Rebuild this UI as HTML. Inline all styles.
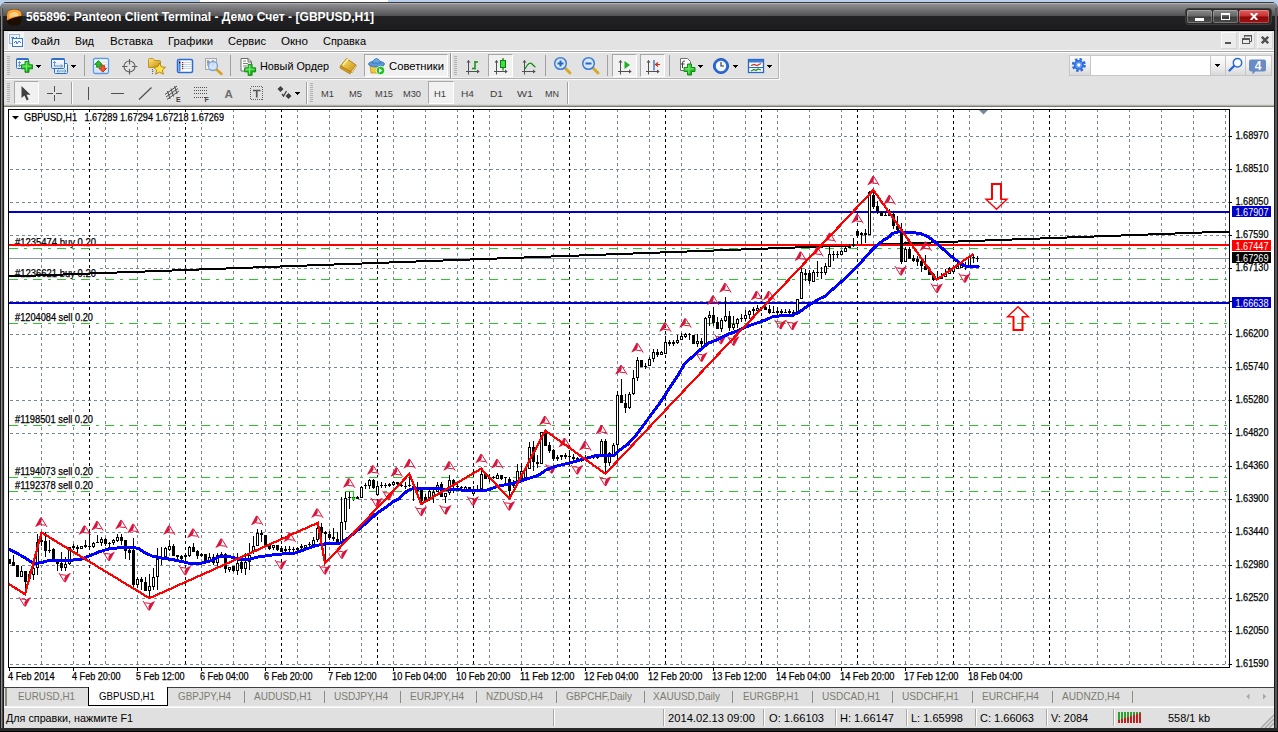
<!DOCTYPE html>
<html><head><meta charset="utf-8"><title>Terminal</title><style>
html,body{margin:0;padding:0;}
body{width:1278px;height:732px;overflow:hidden;position:relative;background:#b9d1ea;font-family:"Liberation Sans",sans-serif;font-size:11px;color:#000;}
.abs{position:absolute;}
#win{position:absolute;left:0;top:2px;width:1278px;height:730px;background:#1b1b1b;border-radius:7px 7px 0 0;overflow:hidden;}
#tb-top{position:absolute;left:0;top:0;width:1278px;height:14px;background:linear-gradient(#3c3c3c 0,#3c3c3c 1px,#b0b0b2 1px,#b0b0b2 2px,#909094 2px,#525254 14px);}
#tb-bot{position:absolute;left:0;top:14px;width:1278px;height:14px;background:linear-gradient(#232325,#1c1c1e);border-bottom:1px solid #000;}
#title{position:absolute;left:26px;top:8px;color:#fff;font-weight:bold;font-size:13px;line-height:16px;white-space:nowrap;letter-spacing:0px;}
#client{position:absolute;left:4px;top:31px;width:1270px;height:697px;background:#e2e2e2;}
.menu{position:absolute;top:34px;font-size:11px;line-height:14px;white-space:nowrap;}
.t{position:absolute;white-space:nowrap;line-height:14px;}
.sep{position:absolute;width:1px;background:#a0a0a0;}
.sepw{position:absolute;width:1px;background:#fff;}
.pressed{position:absolute;background:#f1f1f1;border:1px solid #a8a8a8;border-right-color:#fff;border-bottom-color:#fff;box-sizing:border-box;}
.grip{position:absolute;width:3px;background:repeating-linear-gradient(#b0b0b0 0 1px,transparent 1px 2px);}
.tab{position:absolute;top:691px;color:#7c7c72;font-size:11px;line-height:14px;white-space:nowrap;}
.tsep{position:absolute;top:691px;width:1px;height:12px;background:#8c8c84;}
.st{position:absolute;top:712px;font-size:11px;line-height:14px;white-space:nowrap;}
.ssep{position:absolute;top:709px;width:1px;height:17px;background:#a8a8a8;box-shadow:1px 0 0 #fff;}
</style></head><body>
<div id="win"><div id="tb-top"></div><div id="tb-bot"></div></div>
<div class="abs" style="left:1px;top:8px;width:1px;height:720px;background:#8a8a8a"></div><div class="abs" style="left:2px;top:8px;width:1px;height:720px;background:#4c4c4c"></div>
<div class="abs" style="left:200px;top:0;width:188px;height:2px;background:#fff"></div>
<div class="abs" style="left:1275px;top:8px;width:2px;height:720px;background:#58585a"></div>
<div id="client"></div>
<svg class="abs" style="left:6px;top:9px" width="16" height="17" viewBox="0 0 16 17"><defs><linearGradient id="og" x1="0" y1="0" x2="0" y2="1"><stop offset="0" stop-color="#ffa830"/><stop offset="1" stop-color="#ff9018"/></linearGradient></defs><rect x="1" y="0.5" width="14.500" height="16" rx="5" fill="#1c0e00"/><path d="M1 11.500 V5.500 Q1 0.500 8.200 0.500 Q15.500 0.500 15.500 5.500 V7 Q8 7.500 1 11.500 Z" fill="url(#og)"/><path d="M3.500 9 V5 Q8 1.500 12.500 4.500 V7 Q8 7 3.500 9 Z" fill="#ffe0b0" opacity="0.75"/></svg>
<svg class="abs" style="left:26px;top:8px;overflow:visible" width="350" height="18"><text x="0" y="13" font-size="13px" font-weight="bold" fill="#fff" font-family="Liberation Sans, sans-serif" textLength="348" lengthAdjust="spacingAndGlyphs">565896: Panteon Client Terminal - Демо Счет - [GBPUSD,H1]</text></svg>
<div class="abs" style="left:1186px;top:9px;width:85px;height:15px;border-radius:3px;background:#2a2a2a;box-shadow:0 0 0 1px #3d3d3d"></div>
<div class="abs" style="left:1187px;top:10px;width:25px;height:13px;border-radius:2px;background:linear-gradient(#8a8a8a,#666 48%,#3c3c3c 52%,#4a4a4a);box-shadow:inset 0 0 0 1px rgba(255,255,255,.25)"></div>
<div class="abs" style="left:1213px;top:10px;width:25px;height:13px;border-radius:2px;background:linear-gradient(#8a8a8a,#666 48%,#3c3c3c 52%,#4a4a4a);box-shadow:inset 0 0 0 1px rgba(255,255,255,.25)"></div>
<div class="abs" style="left:1239px;top:10px;width:30px;height:13px;border-radius:2px;background:linear-gradient(#e06060,#c83030 48%,#8c0808 52%,#a01010);box-shadow:inset 0 0 0 1px rgba(255,255,255,.25)"></div>
<div class="abs" style="left:1195px;top:18px;width:9px;height:3px;background:#fff"></div>
<div class="abs" style="left:1221px;top:13px;width:9px;height:7px;border:1px solid #fff;border-top-width:2px;box-sizing:border-box"></div>
<svg class="abs" style="left:1250px;top:13px" width="8" height="7" viewBox="0 0 8 7"><path d="M0.7 0 L7.3 7 M7.3 0 L0.7 7" stroke="#fff" stroke-width="2"/></svg>
<div class="abs" style="left:4px;top:31px;width:1270px;height:19px;background:#e3e3e3"></div>
<div class="abs" style="left:4px;top:50px;width:1270px;height:1px;background:#fff"></div>
<div class="abs" style="left:4px;top:51px;width:1270px;height:1px;background:#a4a4a4"></div>
<div class="abs" style="left:4px;top:52px;width:1270px;height:1px;background:#fff"></div>
<div class="abs" style="left:8px;top:32px;width:16px;height:18px;background:#f4f4f4"></div>
<svg class="abs" style="left:8px;top:33px" width="16" height="16" viewBox="0 0 16 16"><rect x="1.5" y="1.5" width="10" height="9" fill="#eef4ff" stroke="#3a78d8" stroke-dasharray="1 1"/><rect x="4.5" y="5.5" width="10" height="8" fill="#fff" stroke="#3a78d8"/><path d="M3 5 l2 -1 l2 2 l2 -2 M6 10 l2 -2 l1 3 l2 -3 l2 2" stroke="#3a78d8" fill="none" stroke-width="1"/></svg>
<div class="menu" style="left:31px;width:29px"><svg width="29" height="14" style="display:block;overflow:visible"><text x="0" y="11" font-size="11px" font-family="Liberation Sans, sans-serif" textLength="29" lengthAdjust="spacingAndGlyphs">Файл</text></svg></div>
<div class="menu" style="left:75px;width:19px"><svg width="19" height="14" style="display:block;overflow:visible"><text x="0" y="11" font-size="11px" font-family="Liberation Sans, sans-serif" textLength="19" lengthAdjust="spacingAndGlyphs">Вид</text></svg></div>
<div class="menu" style="left:110px;width:43px"><svg width="43" height="14" style="display:block;overflow:visible"><text x="0" y="11" font-size="11px" font-family="Liberation Sans, sans-serif" textLength="43" lengthAdjust="spacingAndGlyphs">Вставка</text></svg></div>
<div class="menu" style="left:168px;width:45px"><svg width="45" height="14" style="display:block;overflow:visible"><text x="0" y="11" font-size="11px" font-family="Liberation Sans, sans-serif" textLength="45" lengthAdjust="spacingAndGlyphs">Графики</text></svg></div>
<div class="menu" style="left:228px;width:38px"><svg width="38" height="14" style="display:block;overflow:visible"><text x="0" y="11" font-size="11px" font-family="Liberation Sans, sans-serif" textLength="38" lengthAdjust="spacingAndGlyphs">Сервис</text></svg></div>
<div class="menu" style="left:281px;width:27px"><svg width="27" height="14" style="display:block;overflow:visible"><text x="0" y="11" font-size="11px" font-family="Liberation Sans, sans-serif" textLength="27" lengthAdjust="spacingAndGlyphs">Окно</text></svg></div>
<div class="menu" style="left:323px;width:43px"><svg width="43" height="14" style="display:block;overflow:visible"><text x="0" y="11" font-size="11px" font-family="Liberation Sans, sans-serif" textLength="43" lengthAdjust="spacingAndGlyphs">Справка</text></svg></div>
<div class="abs" style="left:1221px;top:32px;width:16px;height:17px;background:#ececec;border:1px solid #f8f8f8;border-right-color:#d4d4d4;border-bottom-color:#d4d4d4;box-sizing:border-box"></div>
<div class="abs" style="left:1239px;top:32px;width:16px;height:17px;background:#ececec;border:1px solid #f8f8f8;border-right-color:#d4d4d4;border-bottom-color:#d4d4d4;box-sizing:border-box"></div>
<div class="abs" style="left:1257px;top:32px;width:16px;height:17px;background:#ececec;border:1px solid #f8f8f8;border-right-color:#d4d4d4;border-bottom-color:#d4d4d4;box-sizing:border-box"></div>
<div class="abs" style="left:1225px;top:42px;width:6px;height:2px;background:#555"></div>
<svg class="abs" style="left:1241px;top:34px" width="12" height="12" viewBox="0 0 12 12"><path d="M3.5 3.5 V1.5 H10.5 V7.5 H8.5" stroke="#555" fill="none"/><rect x="1.5" y="4.5" width="7" height="5" stroke="#555" fill="none"/><rect x="1" y="4" width="8" height="2" fill="#555"/><rect x="3" y="1" width="8" height="1.5" fill="#555"/></svg>
<svg class="abs" style="left:1261px;top:36px" width="8" height="8" viewBox="0 0 8 8"><path d="M0.8 0.8 L7.2 7.2 M7.2 0.8 L0.8 7.2" stroke="#505050" stroke-width="2.4"/></svg>
<svg width="0" height="0" style="position:absolute"><defs><linearGradient id="pg" x1="0" y1="0" x2="1" y2="1"><stop offset="0" stop-color="#50e850"/><stop offset="1" stop-color="#08a808"/></linearGradient><linearGradient id="wg" x1="0" y1="0" x2="0" y2="1"><stop offset="0" stop-color="#ffffff"/><stop offset="1" stop-color="#d4e6fa"/></linearGradient><linearGradient id="gold" x1="0" y1="0" x2="1" y2="1"><stop offset="0" stop-color="#ffe878"/><stop offset="1" stop-color="#c88c10"/></linearGradient></defs></svg>
<div class="abs" style="left:4px;top:53px;width:1270px;height:53px;background:#e2e2e2"></div>
<div class="abs" style="left:5px;top:79px;width:775px;height:1px;background:#fafafa"></div>
<div class="abs" style="left:5px;top:77px;width:774px;height:1px;background:#eeeeee"></div>
<div class="abs" style="left:5px;top:78px;width:774px;height:1px;background:#b0b0b0"></div>
<div class="abs" style="left:778px;top:53px;width:1px;height:26px;background:#b8b8b8"></div>
<div class="abs" style="left:779px;top:53px;width:1px;height:27px;background:#fafafa"></div>
<div class="abs" style="left:4px;top:104px;width:1270px;height:1px;background:#d8d8d8"></div>
<div class="abs" style="left:4px;top:105px;width:1270px;height:1px;background:#b4b4ac"></div>
<div class="abs" style="left:4px;top:106px;width:1270px;height:1px;background:#7a786c"></div>
<div class="grip" style="left:7px;top:56px;height:20px"></div>
<div class="grip" style="left:454px;top:56px;height:20px"></div>
<div class="grip" style="left:7px;top:83px;height:20px"></div>
<div class="grip" style="left:310px;top:83px;height:20px"></div>
<div class="sep" style="left:84px;top:55px;height:21px"></div>
<div class="sep" style="left:230px;top:55px;height:21px"></div>
<div class="sep" style="left:545px;top:55px;height:21px"></div>
<div class="sep" style="left:607px;top:55px;height:21px"></div>
<div class="sep" style="left:669px;top:55px;height:21px"></div>
<div class="sep" style="left:450px;top:53px;height:25px;background:#909090"></div><div class="sepw" style="left:451px;top:53px;height:25px"></div>
<div class="sep" style="left:71px;top:82px;height:22px"></div><div class="sepw" style="left:72px;top:82px;height:22px"></div>
<div class="sep" style="left:306px;top:82px;height:22px"></div><div class="sepw" style="left:307px;top:82px;height:22px"></div>
<div class="sep" style="left:567px;top:82px;height:22px"></div><div class="sepw" style="left:568px;top:82px;height:22px"></div>
<div class="pressed" style="left:364px;top:54px;width:84px;height:23px"></div>
<div class="pressed" style="left:488px;top:54px;width:25px;height:23px"></div>
<div class="pressed" style="left:612px;top:54px;width:25px;height:23px"></div>
<div class="pressed" style="left:640px;top:54px;width:25px;height:23px"></div>
<div class="pressed" style="left:14px;top:81px;width:25px;height:23px"></div>
<div class="pressed" style="left:428px;top:81px;width:26px;height:23px"></div>
<svg class="abs" style="left:260px;top:59px;overflow:visible" width="69" height="14"><text x="0" y="11" font-size="11px" font-family="Liberation Sans, sans-serif" fill="#000" textLength="69" lengthAdjust="spacingAndGlyphs">Новый Ордер</text></svg>
<svg class="abs" style="left:389px;top:59px;overflow:visible" width="55" height="14"><text x="0" y="11" font-size="11px" font-family="Liberation Sans, sans-serif" fill="#000" textLength="55" lengthAdjust="spacingAndGlyphs">Советники</text></svg>
<svg class="abs" style="left:321px;top:86px;overflow:visible" width="13" height="14"><text x="0" y="11" font-size="9.6px" font-family="Liberation Sans, sans-serif" fill="#404040" textLength="13" lengthAdjust="spacingAndGlyphs">M1</text></svg>
<svg class="abs" style="left:349px;top:86px;overflow:visible" width="13" height="14"><text x="0" y="11" font-size="9.6px" font-family="Liberation Sans, sans-serif" fill="#404040" textLength="13" lengthAdjust="spacingAndGlyphs">M5</text></svg>
<svg class="abs" style="left:375px;top:86px;overflow:visible" width="18" height="14"><text x="0" y="11" font-size="9.6px" font-family="Liberation Sans, sans-serif" fill="#404040" textLength="18" lengthAdjust="spacingAndGlyphs">M15</text></svg>
<svg class="abs" style="left:403px;top:86px;overflow:visible" width="18" height="14"><text x="0" y="11" font-size="9.6px" font-family="Liberation Sans, sans-serif" fill="#404040" textLength="18" lengthAdjust="spacingAndGlyphs">M30</text></svg>
<svg class="abs" style="left:434px;top:86px;overflow:visible" width="12" height="14"><text x="0" y="11" font-size="9.6px" font-family="Liberation Sans, sans-serif" fill="#404040" textLength="12" lengthAdjust="spacingAndGlyphs">H1</text></svg>
<svg class="abs" style="left:461px;top:86px;overflow:visible" width="13" height="14"><text x="0" y="11" font-size="9.6px" font-family="Liberation Sans, sans-serif" fill="#404040" textLength="13" lengthAdjust="spacingAndGlyphs">H4</text></svg>
<svg class="abs" style="left:490px;top:86px;overflow:visible" width="13" height="14"><text x="0" y="11" font-size="9.6px" font-family="Liberation Sans, sans-serif" fill="#404040" textLength="13" lengthAdjust="spacingAndGlyphs">D1</text></svg>
<svg class="abs" style="left:517px;top:86px;overflow:visible" width="16" height="14"><text x="0" y="11" font-size="9.6px" font-family="Liberation Sans, sans-serif" fill="#404040" textLength="16" lengthAdjust="spacingAndGlyphs">W1</text></svg>
<svg class="abs" style="left:545px;top:86px;overflow:visible" width="14" height="14"><text x="0" y="11" font-size="9.6px" font-family="Liberation Sans, sans-serif" fill="#404040" textLength="14" lengthAdjust="spacingAndGlyphs">MN</text></svg>
<svg class="abs" style="left:15px;top:57px" width="20" height="18" viewBox="0 0 20 18"><rect x="1.5" y="1.5" width="12" height="10" rx="1" fill="url(#wg)" stroke="#2e6fc8"/><rect x="1.5" y="1.5" width="12" height="1.5" fill="#2e6fc8"/><path d="M4.5 4.5 v5 M3 6 l1.5 -1.5 l1.5 1.5 M3 8 l1.5 1.5 l1.5 -1.5" stroke="#6088b8" fill="none" stroke-width="0.9"/><path d="M10 4.300000000000001 h4 v3.5 h3.5 v4 h-3.5 v3.5 h-4 v-3.5 h-3.5 v-4 h3.5 z" fill="url(#pg)" stroke="#0c800c" stroke-width="0.9" stroke-linejoin="round"/><path d="M11.4 5.6000000000000005 v8.4 M7.8 9.200000000000001 h8.4" stroke="#8cf48c" stroke-width="1" opacity="0.8"/></svg>
<svg class="abs" style="left:36px;top:65px" width="5" height="3"><path d="M0 0 H5 L2.5 3 Z" fill="#000" shape-rendering="crispEdges"/></svg>
<svg class="abs" style="left:50px;top:57px" width="20" height="18" viewBox="0 0 20 18"><rect x="4.5" y="6.5" width="13" height="10" rx="1" fill="url(#wg)" stroke="#2e6fc8"/><path d="M7 14 h9 M8.5 12.5 l-1.5 1.5 l1.5 1.5 M14.5 12.5 l1.5 1.5 l-1.5 1.5" stroke="#6088b8" fill="none" stroke-width="0.9"/><rect x="1.5" y="1.5" width="13" height="10" rx="1" fill="url(#wg)" stroke="#2e6fc8"/><rect x="1.500" y="1.500" width="13" height="1.500" fill="#2e6fc8"/><path d="M4.500 4.500 v5 M3 6 l1.500 -1.500 l1.500 1.500 M4.500 9 h8 M11 7.500 l1.500 1.500 l-1.500 1.500" stroke="#6088b8" fill="none" stroke-width="0.9"/></svg>
<svg class="abs" style="left:71px;top:65px" width="5" height="3"><path d="M0 0 H5 L2.5 3 Z" fill="#000" shape-rendering="crispEdges"/></svg>
<svg class="abs" style="left:92px;top:57px" width="18" height="18" viewBox="0 0 18 18"><rect x="1.500" y="1.500" width="15" height="15" rx="1.500" fill="url(#wg)" stroke="#5c9ce8" stroke-width="1.300"/><path d="M10 5 h5 M10 7.500 h5 M3 11 h4 M3 13.500 h4" stroke="#d0d8e4" stroke-width="0.8"/><path d="M6.400 3.600 l3.800 3.800 h-2 v2.800 h-3.600 v-2.800 h-2 z" fill="#28c028" stroke="#0c780c" stroke-width="0.8"/><path d="M10.800 15.200 l-3.800 -3.800 h2 v-2.800 h3.600 v2.800 h2 z" fill="#f05828" stroke="#a82808" stroke-width="0.8"/></svg>
<svg class="abs" style="left:121px;top:58px" width="17" height="17" viewBox="0 0 17 17"><circle cx="8.5" cy="8.5" r="5.5" fill="none" stroke="#606060" stroke-width="1.1"/><path d="M8.5 1 v5.500 M8.500 11 v5.500 M1 8.500 h5.500 M11 8.500 h5.500" stroke="#606060" stroke-width="1.100"/></svg>
<svg class="abs" style="left:147px;top:57px" width="20" height="19" viewBox="0 0 20 19"><path d="M1.500 2.500 q0 -1 1 -1 h3 q1 0 1.500 1 l0.500 1 h5 q1 0 1 1 v6 h-12 z" fill="url(#gold)" stroke="#b88c18" stroke-width="0.9"/><path d="M5.5 12 v5 M5.5 14 h2" stroke="#666" stroke-dasharray="1 1" fill="none"/><path d="M12.5 6 l1.8 3.8 l4.2 0.5 l-3.1 2.8 l0.9 4.1 l-3.8 -2.1 l-3.8 2.1 l0.9 -4.1 l-3.1 -2.8 l4.2 -0.5 z" fill="#ffe448" stroke="#a87c10" stroke-width="0.9"/></svg>
<svg class="abs" style="left:176px;top:57px" width="18" height="18" viewBox="0 0 18 18"><rect x="1.500" y="2.500" width="15" height="13" rx="1.500" fill="#fdfeff" stroke="#2c6cd0" stroke-width="1.500"/><rect x="2.500" y="3.500" width="2" height="11" fill="#4a84d8"/><path d="M5.500 5.500 h10 M5.500 7.500 h10 M5.500 9.500 h10 M5.500 11.500 h10" stroke="#b8c8e8" stroke-width="0.8"/><path d="M3 5 h1.200 v1.200 h-1.200 z" fill="#000"/><path d="M6 5 h1.200 v1.200 h-1.200 z M6 11 h1.200 v1.200 h-1.200 z" fill="#f01010"/><path d="M6 7 h1.200 v1.200 h-1.200 z M6 9 h1.200 v1.200 h-1.200 z" fill="#204020"/></svg>
<svg class="abs" style="left:204px;top:57px" width="20" height="19" viewBox="0 0 20 19"><rect x="1.5" y="1.5" width="11" height="11" fill="#f0f0f0" stroke="#a8a8a8"/><path d="M4 3 v6 M9 3 v6 M3 5 h3 M8 5 h3" stroke="#777"/><circle cx="9" cy="9" r="4.5" fill="#cfe4fa" fill-opacity="0.8" stroke="#7aa8e0" stroke-width="1.3"/><path d="M12.5 12.5 l5 4.5" stroke="#d8a020" stroke-width="2.5" stroke-linecap="round"/></svg>
<svg class="abs" style="left:239px;top:57px" width="19" height="19" viewBox="0 0 19 19"><path d="M2 1.500 h7 l3.500 3.500 v9 h-10.500 z" fill="#fff" stroke="#686868"/><path d="M9 1.500 v3.500 h3.500" fill="none" stroke="#686868"/><path d="M4 4 h3 M4 6.500 h5 M4 9 h4" stroke="#808080"/><path d="M9.1 7.35 h4 v3.5 h3.5 v4 h-3.5 v3.5 h-4 v-3.5 h-3.5 v-4 h3.5 z" fill="url(#pg)" stroke="#0c800c" stroke-width="0.9" stroke-linejoin="round"/><path d="M10.5 8.649999999999999 v8.4 M6.8999999999999995 12.25 h8.4" stroke="#8cf48c" stroke-width="1" opacity="0.8"/></svg>
<svg class="abs" style="left:339px;top:57px" width="19" height="18" viewBox="0 0 19 18"><path d="M1.500 9 l6 -7.500 l9.500 6.500 l-5 7 z" fill="url(#gold)" stroke="#a87810" stroke-width="0.9"/><path d="M1.500 9 l10.500 6 l-1 2 l-10 -6 z" fill="#d89c20" stroke="#a87810" stroke-width="0.7"/><path d="M4 8 l5 -6" stroke="#fff0a0" stroke-width="1.500"/><path d="M12 15 l5 -7 l0.500 1 l-4.500 7 z" fill="#fff4d0" stroke="#a87810" stroke-width="0.500"/></svg>
<svg class="abs" style="left:367px;top:56px" width="20" height="20" viewBox="0 0 20 20"><path d="M3 9 h13 l-1 8 h-11 z" fill="#f0c840" stroke="#c09018" stroke-width="0.8"/><ellipse cx="9.5" cy="8" rx="8" ry="3" fill="#5a98d8" stroke="#3070b8" stroke-width="0.8"/><path d="M5 7 q4.5 -9 9 0 z" fill="#6aa8e8" stroke="#3070b8" stroke-width="0.8"/><circle cx="13.5" cy="14.5" r="4.2" fill="#20c020" stroke="#fff" stroke-width="0.8"/><path d="M12 12.3 v4.4 l3.6 -2.2 z" fill="#fff"/></svg>
<svg class="abs" style="left:464px;top:57px" width="18" height="19" viewBox="0 0 18 19"><path d="M4.500 3.500 v14 M2 14.500 h12.500" stroke="#505050" fill="none"/><path d="M2.500 5.500 l2 -2.500 l2 2.500 z M13 12.500 l2.700 2 l-2.700 2 z" fill="#505050"/><path d="M11 4 v8.500 M11 5 h3 M8 11.500 h3" stroke="#109018" stroke-width="1.500" fill="none"/></svg>
<svg class="abs" style="left:492px;top:57px" width="18" height="19" viewBox="0 0 18 19"><path d="M4.500 3.500 v14 M2 14.500 h12.500" stroke="#505050" fill="none"/><path d="M2.500 5.500 l2 -2.500 l2 2.500 z M13 12.500 l2.700 2 l-2.700 2 z" fill="#505050"/><path d="M11 1 v12.500" stroke="#0a700a" stroke-width="1.200"/><rect x="8.500" y="3.500" width="5" height="7" fill="#40e040" stroke="#0a800a" stroke-width="1"/></svg>
<svg class="abs" style="left:520px;top:57px" width="18" height="19" viewBox="0 0 18 19"><path d="M4.500 3.500 v14 M2 14.500 h12.500" stroke="#505050" fill="none"/><path d="M2.500 5.500 l2 -2.500 l2 2.500 z M13 12.500 l2.700 2 l-2.700 2 z" fill="#505050"/><path d="M5 12 q4 -8 7 -5 t3.500 3" stroke="#109018" stroke-width="1.300" fill="none"/></svg>
<svg class="abs" style="left:553px;top:56px" width="20" height="20" viewBox="0 0 20 20"><path d="M11.5 11.5 l5.5 5.5" stroke="#d8a828" stroke-width="3" stroke-linecap="round"/><circle cx="7.5" cy="7.5" r="5.8" fill="#d8e8fa" stroke="#3c7cd8" stroke-width="1.5"/><path d="M4.5 7.5 h6" stroke="#2a64c0" stroke-width="2"/><path d="M7.5 4.5 v6" stroke="#2a64c0" stroke-width="2"/></svg>
<svg class="abs" style="left:581px;top:56px" width="20" height="20" viewBox="0 0 20 20"><path d="M11.5 11.5 l5.5 5.5" stroke="#d8a828" stroke-width="3" stroke-linecap="round"/><circle cx="7.5" cy="7.5" r="5.8" fill="#d8e8fa" stroke="#3c7cd8" stroke-width="1.5"/><path d="M4.5 7.5 h6" stroke="#2a64c0" stroke-width="2"/></svg>
<svg class="abs" style="left:616px;top:57px" width="18" height="19" viewBox="0 0 18 19"><path d="M4.500 3.500 v14 M2 14.500 h12.500" stroke="#505050" fill="none"/><path d="M2.500 5.500 l2 -2.500 l2 2.500 z M13 12.500 l2.700 2 l-2.700 2 z" fill="#505050"/><path d="M8.500 4 v8 l5.500 -4 z" fill="#20b020"/></svg>
<svg class="abs" style="left:644px;top:57px" width="18" height="19" viewBox="0 0 18 19"><path d="M4.500 3.500 v14 M2 14.500 h12.500" stroke="#505050" fill="none"/><path d="M2.500 5.500 l2 -2.500 l2 2.500 z M13 12.500 l2.700 2 l-2.700 2 z" fill="#505050"/><path d="M10 3 v10.500" stroke="#2060c0" stroke-width="1.200"/><path d="M16 7.500 h-4 M14 5.500 l-2.500 2 l2.500 2" stroke="#d03010" stroke-width="1.2" fill="none"/></svg>
<svg class="abs" style="left:678px;top:57px" width="20" height="19" viewBox="0 0 20 19"><path d="M2.500 1.500 h7 l3 3 v9 h-10 z" fill="#fff" stroke="#707070"/><path d="M7 4 q-2.500 -0.500 -2.500 2 v5 M3 7 h3.500" stroke="#404040" fill="none"/><path d="M9.5 7.0 h4 v3.5 h3.5 v4 h-3.5 v3.5 h-4 v-3.5 h-3.5 v-4 h3.5 z" fill="url(#pg)" stroke="#0c800c" stroke-width="0.9" stroke-linejoin="round"/><path d="M10.9 8.3 v8.4 M7.3 11.9 h8.4" stroke="#8cf48c" stroke-width="1" opacity="0.8"/></svg>
<svg class="abs" style="left:698px;top:65px" width="5" height="3"><path d="M0 0 H5 L2.5 3 Z" fill="#000" shape-rendering="crispEdges"/></svg>
<svg class="abs" style="left:712px;top:57px" width="18" height="18" viewBox="0 0 18 18"><circle cx="9" cy="9" r="7.600" fill="#2a6ad8" stroke="#1848a8" stroke-width="0.8"/><circle cx="9" cy="9" r="5.200" fill="#f4f8ff"/><path d="M9 5 v4 h3" stroke="#303030" stroke-width="1.1" fill="none"/></svg>
<svg class="abs" style="left:733px;top:65px" width="5" height="3"><path d="M0 0 H5 L2.5 3 Z" fill="#000" shape-rendering="crispEdges"/></svg>
<svg class="abs" style="left:747px;top:57px" width="18" height="18" viewBox="0 0 18 18"><rect x="1.500" y="2.500" width="15" height="13" fill="#fafcff" stroke="#2a68c8" stroke-width="1.3"/><rect x="2" y="3" width="14" height="2.500" fill="#3c7cd8"/><path d="M2 10.500 h14" stroke="#2a68c8"/><path d="M4 8.500 l3 -1 l3 1 l4 -2" stroke="#c03818" stroke-width="1.2" fill="none"/><path d="M4 14 l3 -1.500 l2 1 l2 -1.500 l3 1" stroke="#189018" stroke-width="1.2" fill="none"/></svg>
<svg class="abs" style="left:767px;top:65px" width="5" height="3"><path d="M0 0 H5 L2.5 3 Z" fill="#000" shape-rendering="crispEdges"/></svg>
<div class="abs" style="left:1069px;top:55px;width:22px;height:21px;background:linear-gradient(#fdfdfd,#f0f0f0 50%,#dadada);border:1px solid #c6c6c6;box-sizing:border-box"></div>
<div class="abs" style="left:1090px;top:55px;width:121px;height:21px;background:#fff;border:1px solid #c6c6c6;box-sizing:border-box"></div>
<div class="abs" style="left:1210px;top:55px;width:16px;height:21px;background:linear-gradient(#fdfdfd,#f0f0f0 50%,#dadada);border:1px solid #c6c6c6;box-sizing:border-box"></div>
<div class="abs" style="left:1225px;top:55px;width:21px;height:21px;background:linear-gradient(#fdfdfd,#f0f0f0 50%,#dadada);border:1px solid #c6c6c6;box-sizing:border-box"></div>
<div class="abs" style="left:1245px;top:55px;width:27px;height:21px;background:linear-gradient(#fdfdfd,#f0f0f0 50%,#dadada);border:1px solid #c6c6c6;box-sizing:border-box"></div>
<svg class="abs" style="left:1070px;top:56px" width="18" height="18" viewBox="0 0 18 18"><circle cx="8.800" cy="9" r="5.600" fill="none" stroke="#2c6ce0" stroke-width="2.800" stroke-dasharray="2.400 2"/><circle cx="8.800" cy="9" r="5" fill="#2c6ce0"/><circle cx="8.800" cy="9" r="3.400" fill="#5c94f0"/><circle cx="8.800" cy="9" r="1.700" fill="#f4f8ff"/></svg>
<svg class="abs" style="left:1215px;top:64px" width="5" height="3"><path d="M0 0 H5 L2.5 3 Z" fill="#000" shape-rendering="crispEdges"/></svg>
<svg class="abs" style="left:1226px;top:56px" width="18" height="18" viewBox="0 0 18 18"><path d="M8.500 9.500 l-5 5" stroke="#2a68d8" stroke-width="2.400" stroke-linecap="round"/><circle cx="11.500" cy="6.800" r="4.200" fill="#fbfdff" stroke="#2a68d8" stroke-width="1.500"/></svg>
<svg class="abs" style="left:1247px;top:56px" width="24" height="22" viewBox="0 0 24 22"><path d="M4 3.400 h13 q2 0 2 2 v8 q0 2 -2 2 h-8.500 l-3 3 v-3 h-1.500 q-2 0 -2 -2 v-8 q0 -2 2 -2 z" fill="#6a8cc4"/><text x="7.700" y="13.500" font-size="12px" font-weight="bold" fill="#fff" font-family="Liberation Sans, sans-serif">4</text></svg>
<svg class="abs" style="left:20px;top:85px" width="12" height="17" viewBox="0 0 12 17"><path d="M1.500 1 v12 l3 -2.500 l2.200 5 l2 -1 l-2.200 -4.800 h4 z" fill="#404040"/></svg>
<svg class="abs" style="left:46px;top:85px" width="17" height="17" viewBox="0 0 17 17"><path d="M8.500 1 v15 M1 8.500 h15" stroke="#505050" stroke-width="1"/><rect x="7" y="7" width="3" height="3" fill="#e2e2e2"/></svg>
<div class="abs" style="left:88px;top:87px;width:1px;height:13px;background:#505050"></div>
<div class="abs" style="left:111px;top:93px;width:13px;height:1px;background:#505050"></div>
<svg class="abs" style="left:138px;top:86px" width="15" height="15" viewBox="0 0 15 15"><path d="M1 13.500 L13.500 1.500" stroke="#505050" stroke-width="1.200"/></svg>
<svg class="abs" style="left:163px;top:84px" width="20" height="20" viewBox="0 0 20 20"><path d="M2 10.500 L14 2 M4 15.500 L16 7 M4.500 7 l2.500 8 M8 4.500 l2.500 8 M11.500 2 l2.500 8 M3 13 L15 4.500" stroke="#505050" stroke-width="1" fill="none"/><text x="13" y="18" font-size="7px" font-weight="bold" font-family="Liberation Sans, sans-serif" fill="#404040">E</text></svg>
<svg class="abs" style="left:192px;top:84px" width="20" height="20" viewBox="0 0 20 20"><path d="M2 3.500 h13 M2 6.500 h13 M2 9.500 h13 M2 13.500 h13" stroke="#505050" stroke-dasharray="1 1"/><text x="12.500" y="18" font-size="7px" font-weight="bold" font-family="Liberation Sans, sans-serif" fill="#404040">F</text></svg>
<div class="t" style="left:224.500px;top:87px;font-size:11.500px;font-weight:bold;color:#6c6c6c;line-height:14px">A</div>
<svg class="abs" style="left:249px;top:85px" width="16" height="16" viewBox="0 0 16 16"><rect x="1.500" y="1.500" width="12" height="13" fill="none" stroke="#606060" stroke-dasharray="1 1" shape-rendering="crispEdges"/><path d="M4 5.500 h7.500 M7.750 5.500 v7" stroke="#585858" stroke-width="1.700"/></svg>
<svg class="abs" style="left:277px;top:85px" width="17" height="16" viewBox="0 0 17 16"><path d="M3.500 1 l3 3 l-3 3 l-3 -3 z M11.500 8 l3 3 l-3 3 l-3 -3 z" fill="#404040"/><path d="M5 9 l1.500 2 l3 -5" stroke="#404040" stroke-width="1.300" fill="none"/></svg>
<svg class="abs" style="left:295px;top:92px" width="5" height="3"><path d="M0 0 H5 L2.5 3 Z" fill="#000" shape-rendering="crispEdges"/></svg>
<svg id="chart" width="1278" height="732" viewBox="0 0 1278 732" style="position:absolute;left:0;top:0">
<defs><clipPath id="cp"><rect x="9" y="110" width="1220" height="557"/></clipPath></defs>
<rect x="5" y="107" width="1269" height="580" fill="#fff"/>
<g shape-rendering="crispEdges" clip-path="url(#cp)">
<line x1="10" x2="1229" y1="136.5" y2="136.5" stroke="#778899" stroke-dasharray="3 3"/>
<line x1="10" x2="1229" y1="169.5" y2="169.5" stroke="#778899" stroke-dasharray="3 3"/>
<line x1="10" x2="1229" y1="202.5" y2="202.5" stroke="#778899" stroke-dasharray="3 3"/>
<line x1="10" x2="1229" y1="235.5" y2="235.5" stroke="#778899" stroke-dasharray="3 3"/>
<line x1="10" x2="1229" y1="268.5" y2="268.5" stroke="#778899" stroke-dasharray="3 3"/>
<line x1="10" x2="1229" y1="301.5" y2="301.5" stroke="#778899" stroke-dasharray="3 3"/>
<line x1="10" x2="1229" y1="334.5" y2="334.5" stroke="#778899" stroke-dasharray="3 3"/>
<line x1="10" x2="1229" y1="367.5" y2="367.5" stroke="#778899" stroke-dasharray="3 3"/>
<line x1="10" x2="1229" y1="400.5" y2="400.5" stroke="#778899" stroke-dasharray="3 3"/>
<line x1="10" x2="1229" y1="433.5" y2="433.5" stroke="#778899" stroke-dasharray="3 3"/>
<line x1="10" x2="1229" y1="466.5" y2="466.5" stroke="#778899" stroke-dasharray="3 3"/>
<line x1="10" x2="1229" y1="499.5" y2="499.5" stroke="#778899" stroke-dasharray="3 3"/>
<line x1="10" x2="1229" y1="532.5" y2="532.5" stroke="#778899" stroke-dasharray="3 3"/>
<line x1="10" x2="1229" y1="565.5" y2="565.5" stroke="#778899" stroke-dasharray="3 3"/>
<line x1="10" x2="1229" y1="598.5" y2="598.5" stroke="#778899" stroke-dasharray="3 3"/>
<line x1="10" x2="1229" y1="631.5" y2="631.5" stroke="#778899" stroke-dasharray="3 3"/>
<line x1="10" x2="1229" y1="664.5" y2="664.5" stroke="#778899" stroke-dasharray="3 3"/>
<line x1="41.5" x2="41.5" y1="109" y2="667" stroke="#778899" stroke-dasharray="3 3"/>
<line x1="73.5" x2="73.5" y1="109" y2="667" stroke="#778899" stroke-dasharray="3 3"/>
<line x1="105.5" x2="105.5" y1="109" y2="667" stroke="#778899" stroke-dasharray="3 3"/>
<line x1="137.5" x2="137.5" y1="109" y2="667" stroke="#778899" stroke-dasharray="3 3"/>
<line x1="169.5" x2="169.5" y1="109" y2="667" stroke="#778899" stroke-dasharray="3 3"/>
<line x1="201.5" x2="201.5" y1="109" y2="667" stroke="#778899" stroke-dasharray="3 3"/>
<line x1="233.5" x2="233.5" y1="109" y2="667" stroke="#778899" stroke-dasharray="3 3"/>
<line x1="265.5" x2="265.5" y1="109" y2="667" stroke="#778899" stroke-dasharray="3 3"/>
<line x1="297.5" x2="297.5" y1="109" y2="667" stroke="#778899" stroke-dasharray="3 3"/>
<line x1="329.5" x2="329.5" y1="109" y2="667" stroke="#778899" stroke-dasharray="3 3"/>
<line x1="361.5" x2="361.5" y1="109" y2="667" stroke="#778899" stroke-dasharray="3 3"/>
<line x1="393.5" x2="393.5" y1="109" y2="667" stroke="#778899" stroke-dasharray="3 3"/>
<line x1="425.5" x2="425.5" y1="109" y2="667" stroke="#778899" stroke-dasharray="3 3"/>
<line x1="457.5" x2="457.5" y1="109" y2="667" stroke="#778899" stroke-dasharray="3 3"/>
<line x1="489.5" x2="489.5" y1="109" y2="667" stroke="#778899" stroke-dasharray="3 3"/>
<line x1="521.5" x2="521.5" y1="109" y2="667" stroke="#778899" stroke-dasharray="3 3"/>
<line x1="553.5" x2="553.5" y1="109" y2="667" stroke="#778899" stroke-dasharray="3 3"/>
<line x1="585.5" x2="585.5" y1="109" y2="667" stroke="#778899" stroke-dasharray="3 3"/>
<line x1="617.5" x2="617.5" y1="109" y2="667" stroke="#778899" stroke-dasharray="3 3"/>
<line x1="649.5" x2="649.5" y1="109" y2="667" stroke="#778899" stroke-dasharray="3 3"/>
<line x1="681.5" x2="681.5" y1="109" y2="667" stroke="#778899" stroke-dasharray="3 3"/>
<line x1="713.5" x2="713.5" y1="109" y2="667" stroke="#778899" stroke-dasharray="3 3"/>
<line x1="745.5" x2="745.5" y1="109" y2="667" stroke="#778899" stroke-dasharray="3 3"/>
<line x1="777.5" x2="777.5" y1="109" y2="667" stroke="#778899" stroke-dasharray="3 3"/>
<line x1="809.5" x2="809.5" y1="109" y2="667" stroke="#778899" stroke-dasharray="3 3"/>
<line x1="841.5" x2="841.5" y1="109" y2="667" stroke="#778899" stroke-dasharray="3 3"/>
<line x1="873.5" x2="873.5" y1="109" y2="667" stroke="#778899" stroke-dasharray="3 3"/>
<line x1="905.5" x2="905.5" y1="109" y2="667" stroke="#778899" stroke-dasharray="3 3"/>
<line x1="937.5" x2="937.5" y1="109" y2="667" stroke="#778899" stroke-dasharray="3 3"/>
<line x1="969.5" x2="969.5" y1="109" y2="667" stroke="#778899" stroke-dasharray="3 3"/>
<line x1="1001.5" x2="1001.5" y1="109" y2="667" stroke="#778899" stroke-dasharray="3 3"/>
<line x1="1033.5" x2="1033.5" y1="109" y2="667" stroke="#778899" stroke-dasharray="3 3"/>
<line x1="1065.5" x2="1065.5" y1="109" y2="667" stroke="#778899" stroke-dasharray="3 3"/>
<line x1="1097.5" x2="1097.5" y1="109" y2="667" stroke="#778899" stroke-dasharray="3 3"/>
<line x1="1129.5" x2="1129.5" y1="109" y2="667" stroke="#778899" stroke-dasharray="3 3"/>
<line x1="1161.5" x2="1161.5" y1="109" y2="667" stroke="#778899" stroke-dasharray="3 3"/>
<line x1="1193.5" x2="1193.5" y1="109" y2="667" stroke="#778899" stroke-dasharray="3 3"/>
<line x1="1225.5" x2="1225.5" y1="109" y2="667" stroke="#778899" stroke-dasharray="3 3"/>
<line x1="89.5" x2="89.5" y1="109" y2="667" stroke="#000" stroke-dasharray="3 3"/>
<line x1="185.5" x2="185.5" y1="109" y2="667" stroke="#000" stroke-dasharray="3 3"/>
<line x1="281.5" x2="281.5" y1="109" y2="667" stroke="#000" stroke-dasharray="3 3"/>
<line x1="377.5" x2="377.5" y1="109" y2="667" stroke="#000" stroke-dasharray="3 3"/>
<line x1="473.5" x2="473.5" y1="109" y2="667" stroke="#000" stroke-dasharray="3 3"/>
<line x1="569.5" x2="569.5" y1="109" y2="667" stroke="#000" stroke-dasharray="3 3"/>
<line x1="665.5" x2="665.5" y1="109" y2="667" stroke="#000" stroke-dasharray="3 3"/>
<line x1="761.5" x2="761.5" y1="109" y2="667" stroke="#000" stroke-dasharray="3 3"/>
<line x1="857.5" x2="857.5" y1="109" y2="667" stroke="#000" stroke-dasharray="3 3"/>
<line x1="953.5" x2="953.5" y1="109" y2="667" stroke="#000" stroke-dasharray="3 3"/>
<line x1="1049.5" x2="1049.5" y1="109" y2="667" stroke="#000" stroke-dasharray="3 3"/>
</g>
<rect x="10" y="112" width="216" height="11" fill="#fff"/>
<g font-family="Liberation Sans, sans-serif" font-size="10.2px" fill="#000" stroke="#000" stroke-width="0.25">
<rect x="9" y="237" width="91" height="12" fill="#fff" stroke="none"/>
<text x="15" y="246" textLength="81" lengthAdjust="spacingAndGlyphs">#1235474 buy 0.20</text>
<rect x="9" y="268" width="91" height="12" fill="#fff" stroke="none"/>
<text x="15" y="277" textLength="81" lengthAdjust="spacingAndGlyphs">#1236621 buy 0.20</text>
<rect x="9" y="312" width="91" height="12" fill="#fff" stroke="none"/>
<text x="15" y="321" textLength="78" lengthAdjust="spacingAndGlyphs">#1204084 sell 0.20</text>
<rect x="9" y="414" width="91" height="12" fill="#fff" stroke="none"/>
<text x="15" y="423" textLength="78" lengthAdjust="spacingAndGlyphs">#1198501 sell 0.20</text>
<rect x="9" y="466" width="91" height="12" fill="#fff" stroke="none"/>
<text x="15" y="475" textLength="78" lengthAdjust="spacingAndGlyphs">#1194073 sell 0.20</text>
<rect x="9" y="480" width="91" height="12" fill="#fff" stroke="none"/>
<text x="15" y="489" textLength="78" lengthAdjust="spacingAndGlyphs">#1192378 sell 0.20</text>
</g>
<g shape-rendering="crispEdges" clip-path="url(#cp)">
<line x1="9" x2="1229" y1="248.5" y2="248.5" stroke="#2fc32f" stroke-dasharray="9 6 3 6"/>
<line x1="9" x2="1229" y1="279.5" y2="279.5" stroke="#2fc32f" stroke-dasharray="9 6 3 6"/>
<line x1="9" x2="1229" y1="323.5" y2="323.5" stroke="#2fc32f" stroke-dasharray="9 6 3 6"/>
<line x1="9" x2="1229" y1="425.5" y2="425.5" stroke="#2fc32f" stroke-dasharray="9 6 3 6"/>
<line x1="9" x2="1229" y1="477.5" y2="477.5" stroke="#2fc32f" stroke-dasharray="9 6 3 6"/>
<line x1="9" x2="1229" y1="491.5" y2="491.5" stroke="#2fc32f" stroke-dasharray="9 6 3 6"/>
<line x1="9" x2="1229" y1="258.5" y2="258.5" stroke="#8a98ad"/>
<rect x="9" y="211" width="1220" height="2" fill="#0000c8"/>
<rect x="9" y="302" width="1220" height="2" fill="#0000c8"/>
</g>
<g clip-path="url(#cp)">
<path d="M9 275h27v2h-27zM36 274h27v2h-27zM63 273h27v2h-27zM90 272h27v2h-27zM117 271h28v2h-28zM145 270h27v2h-27zM172 269h27v2h-27zM199 268h27v2h-27zM226 267h27v2h-27zM253 266h27v2h-27zM280 265h27v2h-27zM307 264h27v2h-27zM334 263h28v2h-28zM362 262h27v2h-27zM389 261h27v2h-27zM416 260h27v2h-27zM443 259h27v2h-27zM470 258h27v2h-27zM497 257h27v2h-27zM524 256h27v2h-27zM551 255h28v2h-28zM579 254h27v2h-27zM606 253h27v2h-27zM633 252h27v2h-27zM660 251h27v2h-27zM687 250h27v2h-27zM714 249h27v2h-27zM741 248h27v2h-27zM768 247h27v2h-27zM795 246h28v2h-28zM823 245h27v2h-27zM850 244h27v2h-27zM877 243h27v2h-27zM904 242h27v2h-27zM931 241h27v2h-27zM958 240h27v2h-27zM985 239h27v2h-27zM1012 238h28v2h-28zM1040 237h27v2h-27zM1067 236h27v2h-27zM1094 235h27v2h-27zM1121 234h27v2h-27zM1148 233h27v2h-27zM1175 232h27v2h-27zM1202 231h27v2h-27zM1229 230h1v2h-1z" fill="#000" shape-rendering="crispEdges"/>
<rect x="9" y="244" width="1220" height="2" fill="#ff0000" shape-rendering="crispEdges"/>
<g shape-rendering="crispEdges">
<rect x="9" y="559" width="1" height="5" fill="#000"/>
<rect x="8" y="559" width="3" height="5" fill="#000"/>
<rect x="13" y="555" width="1" height="11" fill="#000"/>
<rect x="12" y="562" width="3" height="4" fill="#000"/>
<rect x="17" y="565" width="1" height="12" fill="#000"/>
<rect x="16" y="565" width="3" height="12" fill="#000"/>
<rect x="21" y="566" width="1" height="11" fill="#000"/>
<rect x="20" y="571" width="3" height="6" fill="#fff"/>
<rect x="20" y="571" width="1" height="6" fill="#000"/>
<rect x="22" y="571" width="1" height="6" fill="#000"/>
<rect x="20" y="571" width="3" height="1" fill="#000"/>
<rect x="20" y="576" width="3" height="1" fill="#000"/>
<rect x="25" y="571" width="1" height="22" fill="#000"/>
<rect x="24" y="571" width="3" height="11" fill="#000"/>
<rect x="29" y="571" width="1" height="11" fill="#000"/>
<rect x="28" y="574" width="3" height="5" fill="#000"/>
<rect x="33" y="564" width="1" height="16" fill="#000"/>
<rect x="32" y="568" width="3" height="7" fill="#fff"/>
<rect x="32" y="568" width="1" height="7" fill="#000"/>
<rect x="34" y="568" width="1" height="7" fill="#000"/>
<rect x="32" y="568" width="3" height="1" fill="#000"/>
<rect x="32" y="574" width="3" height="1" fill="#000"/>
<rect x="37" y="534" width="1" height="41" fill="#000"/>
<rect x="36" y="542" width="3" height="26" fill="#fff"/>
<rect x="36" y="542" width="1" height="26" fill="#000"/>
<rect x="38" y="542" width="1" height="26" fill="#000"/>
<rect x="36" y="542" width="3" height="1" fill="#000"/>
<rect x="36" y="567" width="3" height="1" fill="#000"/>
<rect x="41" y="533" width="1" height="13" fill="#000"/>
<rect x="40" y="540" width="3" height="2" fill="#000"/>
<rect x="45" y="532" width="1" height="25" fill="#000"/>
<rect x="44" y="541" width="3" height="10" fill="#000"/>
<rect x="49" y="540" width="1" height="13" fill="#000"/>
<rect x="48" y="550" width="3" height="1" fill="#000"/>
<rect x="53" y="548" width="1" height="12" fill="#000"/>
<rect x="52" y="549" width="3" height="11" fill="#000"/>
<rect x="57" y="559" width="1" height="12" fill="#000"/>
<rect x="56" y="560" width="3" height="4" fill="#000"/>
<rect x="61" y="552" width="1" height="19" fill="#000"/>
<rect x="60" y="563" width="3" height="5" fill="#000"/>
<rect x="65" y="557" width="1" height="14" fill="#000"/>
<rect x="64" y="564" width="3" height="4" fill="#fff"/>
<rect x="64" y="564" width="1" height="4" fill="#000"/>
<rect x="66" y="564" width="1" height="4" fill="#000"/>
<rect x="64" y="564" width="3" height="1" fill="#000"/>
<rect x="64" y="567" width="3" height="1" fill="#000"/>
<rect x="69" y="547" width="1" height="18" fill="#000"/>
<rect x="68" y="547" width="3" height="17" fill="#fff"/>
<rect x="68" y="547" width="1" height="17" fill="#000"/>
<rect x="70" y="547" width="1" height="17" fill="#000"/>
<rect x="68" y="547" width="3" height="1" fill="#000"/>
<rect x="68" y="563" width="3" height="1" fill="#000"/>
<rect x="73" y="544" width="1" height="6" fill="#000"/>
<rect x="72" y="546" width="3" height="2" fill="#000"/>
<rect x="77" y="545" width="1" height="8" fill="#000"/>
<rect x="76" y="547" width="3" height="2" fill="#000"/>
<rect x="81" y="546" width="1" height="3" fill="#000"/>
<rect x="80" y="546" width="3" height="3" fill="#fff"/>
<rect x="80" y="546" width="1" height="3" fill="#000"/>
<rect x="82" y="546" width="1" height="3" fill="#000"/>
<rect x="80" y="546" width="3" height="1" fill="#000"/>
<rect x="80" y="548" width="3" height="1" fill="#000"/>
<rect x="85" y="540" width="1" height="8" fill="#000"/>
<rect x="84" y="545" width="3" height="2" fill="#000"/>
<rect x="89" y="529" width="1" height="21" fill="#000"/>
<rect x="88" y="546" width="3" height="1" fill="#000"/>
<rect x="93" y="542" width="1" height="6" fill="#000"/>
<rect x="92" y="543" width="3" height="4" fill="#fff"/>
<rect x="92" y="543" width="1" height="4" fill="#000"/>
<rect x="94" y="543" width="1" height="4" fill="#000"/>
<rect x="92" y="543" width="3" height="1" fill="#000"/>
<rect x="92" y="546" width="3" height="1" fill="#000"/>
<rect x="97" y="535" width="1" height="8" fill="#000"/>
<rect x="96" y="542" width="3" height="1" fill="#000"/>
<rect x="101" y="537" width="1" height="9" fill="#000"/>
<rect x="100" y="539" width="3" height="4" fill="#fff"/>
<rect x="100" y="539" width="1" height="4" fill="#000"/>
<rect x="102" y="539" width="1" height="4" fill="#000"/>
<rect x="100" y="539" width="3" height="1" fill="#000"/>
<rect x="100" y="542" width="3" height="1" fill="#000"/>
<rect x="105" y="538" width="1" height="8" fill="#000"/>
<rect x="104" y="539" width="3" height="5" fill="#000"/>
<rect x="109" y="542" width="1" height="6" fill="#000"/>
<rect x="108" y="543" width="3" height="1" fill="#000"/>
<rect x="113" y="539" width="1" height="6" fill="#000"/>
<rect x="112" y="540" width="3" height="3" fill="#fff"/>
<rect x="112" y="540" width="1" height="3" fill="#000"/>
<rect x="114" y="540" width="1" height="3" fill="#000"/>
<rect x="112" y="540" width="3" height="1" fill="#000"/>
<rect x="112" y="542" width="3" height="1" fill="#000"/>
<rect x="117" y="534" width="1" height="8" fill="#000"/>
<rect x="116" y="537" width="3" height="4" fill="#fff"/>
<rect x="116" y="537" width="1" height="4" fill="#000"/>
<rect x="118" y="537" width="1" height="4" fill="#000"/>
<rect x="116" y="537" width="3" height="1" fill="#000"/>
<rect x="116" y="540" width="3" height="1" fill="#000"/>
<rect x="121" y="534" width="1" height="11" fill="#000"/>
<rect x="120" y="537" width="3" height="4" fill="#000"/>
<rect x="125" y="540" width="1" height="19" fill="#000"/>
<rect x="124" y="540" width="3" height="11" fill="#000"/>
<rect x="129" y="549" width="1" height="11" fill="#000"/>
<rect x="128" y="550" width="3" height="3" fill="#000"/>
<rect x="133" y="538" width="1" height="49" fill="#000"/>
<rect x="132" y="550" width="3" height="35" fill="#000"/>
<rect x="137" y="577" width="1" height="11" fill="#000"/>
<rect x="136" y="579" width="3" height="6" fill="#fff"/>
<rect x="136" y="579" width="1" height="6" fill="#000"/>
<rect x="138" y="579" width="1" height="6" fill="#000"/>
<rect x="136" y="579" width="3" height="1" fill="#000"/>
<rect x="136" y="584" width="3" height="1" fill="#000"/>
<rect x="141" y="577" width="1" height="13" fill="#000"/>
<rect x="140" y="579" width="3" height="3" fill="#000"/>
<rect x="145" y="577" width="1" height="14" fill="#000"/>
<rect x="144" y="582" width="3" height="9" fill="#000"/>
<rect x="149" y="574" width="1" height="23" fill="#000"/>
<rect x="148" y="586" width="3" height="5" fill="#fff"/>
<rect x="148" y="586" width="1" height="5" fill="#000"/>
<rect x="150" y="586" width="1" height="5" fill="#000"/>
<rect x="148" y="586" width="3" height="1" fill="#000"/>
<rect x="148" y="590" width="3" height="1" fill="#000"/>
<rect x="153" y="568" width="1" height="22" fill="#000"/>
<rect x="152" y="577" width="3" height="10" fill="#fff"/>
<rect x="152" y="577" width="1" height="10" fill="#000"/>
<rect x="154" y="577" width="1" height="10" fill="#000"/>
<rect x="152" y="577" width="3" height="1" fill="#000"/>
<rect x="152" y="586" width="3" height="1" fill="#000"/>
<rect x="157" y="548" width="1" height="42" fill="#000"/>
<rect x="156" y="559" width="3" height="18" fill="#fff"/>
<rect x="156" y="559" width="1" height="18" fill="#000"/>
<rect x="158" y="559" width="1" height="18" fill="#000"/>
<rect x="156" y="559" width="3" height="1" fill="#000"/>
<rect x="156" y="576" width="3" height="1" fill="#000"/>
<rect x="161" y="547" width="1" height="18" fill="#000"/>
<rect x="160" y="557" width="3" height="2" fill="#fff"/>
<rect x="160" y="557" width="1" height="2" fill="#000"/>
<rect x="162" y="557" width="1" height="2" fill="#000"/>
<rect x="160" y="557" width="3" height="1" fill="#000"/>
<rect x="160" y="558" width="3" height="1" fill="#000"/>
<rect x="165" y="547" width="1" height="13" fill="#000"/>
<rect x="164" y="548" width="3" height="9" fill="#fff"/>
<rect x="164" y="548" width="1" height="9" fill="#000"/>
<rect x="166" y="548" width="1" height="9" fill="#000"/>
<rect x="164" y="548" width="3" height="1" fill="#000"/>
<rect x="164" y="556" width="3" height="1" fill="#000"/>
<rect x="169" y="540" width="1" height="11" fill="#000"/>
<rect x="168" y="546" width="3" height="4" fill="#fff"/>
<rect x="168" y="546" width="1" height="4" fill="#000"/>
<rect x="170" y="546" width="1" height="4" fill="#000"/>
<rect x="168" y="546" width="3" height="1" fill="#000"/>
<rect x="168" y="549" width="3" height="1" fill="#000"/>
<rect x="173" y="544" width="1" height="12" fill="#000"/>
<rect x="172" y="546" width="3" height="10" fill="#000"/>
<rect x="177" y="555" width="1" height="4" fill="#000"/>
<rect x="176" y="555" width="3" height="2" fill="#000"/>
<rect x="181" y="555" width="1" height="5" fill="#000"/>
<rect x="180" y="556" width="3" height="3" fill="#000"/>
<rect x="185" y="553" width="1" height="8" fill="#000"/>
<rect x="184" y="555" width="3" height="2" fill="#fff"/>
<rect x="184" y="555" width="1" height="2" fill="#000"/>
<rect x="186" y="555" width="1" height="2" fill="#000"/>
<rect x="184" y="555" width="3" height="1" fill="#000"/>
<rect x="184" y="556" width="3" height="1" fill="#000"/>
<rect x="189" y="546" width="1" height="11" fill="#000"/>
<rect x="188" y="547" width="3" height="9" fill="#fff"/>
<rect x="188" y="547" width="1" height="9" fill="#000"/>
<rect x="190" y="547" width="1" height="9" fill="#000"/>
<rect x="188" y="547" width="3" height="1" fill="#000"/>
<rect x="188" y="555" width="3" height="1" fill="#000"/>
<rect x="193" y="543" width="1" height="9" fill="#000"/>
<rect x="192" y="547" width="3" height="5" fill="#000"/>
<rect x="197" y="550" width="1" height="9" fill="#000"/>
<rect x="196" y="551" width="3" height="5" fill="#000"/>
<rect x="201" y="553" width="1" height="4" fill="#000"/>
<rect x="200" y="554" width="3" height="2" fill="#000"/>
<rect x="205" y="554" width="1" height="7" fill="#000"/>
<rect x="204" y="554" width="3" height="7" fill="#000"/>
<rect x="209" y="553" width="1" height="8" fill="#000"/>
<rect x="208" y="557" width="3" height="4" fill="#fff"/>
<rect x="208" y="557" width="1" height="4" fill="#000"/>
<rect x="210" y="557" width="1" height="4" fill="#000"/>
<rect x="208" y="557" width="3" height="1" fill="#000"/>
<rect x="208" y="560" width="3" height="1" fill="#000"/>
<rect x="213" y="554" width="1" height="11" fill="#000"/>
<rect x="212" y="557" width="3" height="6" fill="#000"/>
<rect x="217" y="553" width="1" height="14" fill="#000"/>
<rect x="216" y="555" width="3" height="8" fill="#fff"/>
<rect x="216" y="555" width="1" height="8" fill="#000"/>
<rect x="218" y="555" width="1" height="8" fill="#000"/>
<rect x="216" y="555" width="3" height="1" fill="#000"/>
<rect x="216" y="562" width="3" height="1" fill="#000"/>
<rect x="221" y="552" width="1" height="4" fill="#000"/>
<rect x="220" y="554" width="3" height="2" fill="#000"/>
<rect x="225" y="553" width="1" height="20" fill="#000"/>
<rect x="224" y="554" width="3" height="15" fill="#000"/>
<rect x="229" y="567" width="1" height="5" fill="#000"/>
<rect x="228" y="567" width="3" height="3" fill="#fff"/>
<rect x="228" y="567" width="1" height="3" fill="#000"/>
<rect x="230" y="567" width="1" height="3" fill="#000"/>
<rect x="228" y="567" width="3" height="1" fill="#000"/>
<rect x="228" y="569" width="3" height="1" fill="#000"/>
<rect x="233" y="566" width="1" height="6" fill="#000"/>
<rect x="232" y="566" width="3" height="5" fill="#000"/>
<rect x="237" y="553" width="1" height="22" fill="#000"/>
<rect x="236" y="563" width="3" height="8" fill="#fff"/>
<rect x="236" y="563" width="1" height="8" fill="#000"/>
<rect x="238" y="563" width="1" height="8" fill="#000"/>
<rect x="236" y="563" width="3" height="1" fill="#000"/>
<rect x="236" y="570" width="3" height="1" fill="#000"/>
<rect x="241" y="561" width="1" height="12" fill="#000"/>
<rect x="240" y="562" width="3" height="7" fill="#000"/>
<rect x="245" y="553" width="1" height="22" fill="#000"/>
<rect x="244" y="562" width="3" height="7" fill="#fff"/>
<rect x="244" y="562" width="1" height="7" fill="#000"/>
<rect x="246" y="562" width="1" height="7" fill="#000"/>
<rect x="244" y="562" width="3" height="1" fill="#000"/>
<rect x="244" y="568" width="3" height="1" fill="#000"/>
<rect x="249" y="543" width="1" height="27" fill="#000"/>
<rect x="248" y="555" width="3" height="7" fill="#fff"/>
<rect x="248" y="555" width="1" height="7" fill="#000"/>
<rect x="250" y="555" width="1" height="7" fill="#000"/>
<rect x="248" y="555" width="3" height="1" fill="#000"/>
<rect x="248" y="561" width="3" height="1" fill="#000"/>
<rect x="253" y="536" width="1" height="18" fill="#000"/>
<rect x="252" y="546" width="3" height="5" fill="#fff"/>
<rect x="252" y="546" width="1" height="5" fill="#000"/>
<rect x="254" y="546" width="1" height="5" fill="#000"/>
<rect x="252" y="546" width="3" height="1" fill="#000"/>
<rect x="252" y="550" width="3" height="1" fill="#000"/>
<rect x="257" y="529" width="1" height="17" fill="#000"/>
<rect x="256" y="533" width="3" height="13" fill="#fff"/>
<rect x="256" y="533" width="1" height="13" fill="#000"/>
<rect x="258" y="533" width="1" height="13" fill="#000"/>
<rect x="256" y="533" width="3" height="1" fill="#000"/>
<rect x="256" y="545" width="3" height="1" fill="#000"/>
<rect x="261" y="530" width="1" height="12" fill="#000"/>
<rect x="260" y="533" width="3" height="2" fill="#000"/>
<rect x="265" y="535" width="1" height="10" fill="#000"/>
<rect x="264" y="535" width="3" height="10" fill="#000"/>
<rect x="269" y="544" width="1" height="6" fill="#000"/>
<rect x="268" y="545" width="3" height="4" fill="#000"/>
<rect x="273" y="545" width="1" height="5" fill="#000"/>
<rect x="272" y="545" width="3" height="3" fill="#fff"/>
<rect x="272" y="545" width="1" height="3" fill="#000"/>
<rect x="274" y="545" width="1" height="3" fill="#000"/>
<rect x="272" y="545" width="3" height="1" fill="#000"/>
<rect x="272" y="547" width="3" height="1" fill="#000"/>
<rect x="277" y="545" width="1" height="6" fill="#000"/>
<rect x="276" y="545" width="3" height="5" fill="#000"/>
<rect x="281" y="546" width="1" height="6" fill="#000"/>
<rect x="280" y="548" width="3" height="4" fill="#000"/>
<rect x="285" y="546" width="1" height="7" fill="#000"/>
<rect x="284" y="549" width="3" height="2" fill="#fff"/>
<rect x="284" y="549" width="1" height="2" fill="#000"/>
<rect x="286" y="549" width="1" height="2" fill="#000"/>
<rect x="284" y="549" width="3" height="1" fill="#000"/>
<rect x="284" y="550" width="3" height="1" fill="#000"/>
<rect x="289" y="546" width="1" height="6" fill="#000"/>
<rect x="288" y="549" width="3" height="1" fill="#000"/>
<rect x="293" y="547" width="1" height="5" fill="#000"/>
<rect x="292" y="549" width="3" height="1" fill="#000"/>
<rect x="297" y="547" width="1" height="4" fill="#000"/>
<rect x="296" y="548" width="3" height="2" fill="#000"/>
<rect x="301" y="544" width="1" height="6" fill="#000"/>
<rect x="300" y="546" width="3" height="2" fill="#000"/>
<rect x="305" y="545" width="1" height="3" fill="#000"/>
<rect x="304" y="545" width="3" height="3" fill="#fff"/>
<rect x="304" y="545" width="1" height="3" fill="#000"/>
<rect x="306" y="545" width="1" height="3" fill="#000"/>
<rect x="304" y="545" width="3" height="1" fill="#000"/>
<rect x="304" y="547" width="3" height="1" fill="#000"/>
<rect x="309" y="542" width="1" height="4" fill="#000"/>
<rect x="308" y="544" width="3" height="1" fill="#000"/>
<rect x="313" y="537" width="1" height="8" fill="#000"/>
<rect x="312" y="540" width="3" height="5" fill="#fff"/>
<rect x="312" y="540" width="1" height="5" fill="#000"/>
<rect x="314" y="540" width="1" height="5" fill="#000"/>
<rect x="312" y="540" width="3" height="1" fill="#000"/>
<rect x="312" y="544" width="3" height="1" fill="#000"/>
<rect x="317" y="523" width="1" height="19" fill="#000"/>
<rect x="316" y="528" width="3" height="12" fill="#fff"/>
<rect x="316" y="528" width="1" height="12" fill="#000"/>
<rect x="318" y="528" width="1" height="12" fill="#000"/>
<rect x="316" y="528" width="3" height="1" fill="#000"/>
<rect x="316" y="539" width="3" height="1" fill="#000"/>
<rect x="321" y="523" width="1" height="19" fill="#000"/>
<rect x="320" y="527" width="3" height="6" fill="#000"/>
<rect x="325" y="531" width="1" height="32" fill="#000"/>
<rect x="324" y="532" width="3" height="2" fill="#000"/>
<rect x="329" y="531" width="1" height="9" fill="#000"/>
<rect x="328" y="534" width="3" height="4" fill="#000"/>
<rect x="333" y="528" width="1" height="13" fill="#000"/>
<rect x="332" y="537" width="3" height="2" fill="#000"/>
<rect x="337" y="532" width="1" height="10" fill="#000"/>
<rect x="336" y="539" width="3" height="3" fill="#000"/>
<rect x="341" y="497" width="1" height="45" fill="#000"/>
<rect x="340" y="522" width="3" height="20" fill="#fff"/>
<rect x="340" y="522" width="1" height="20" fill="#000"/>
<rect x="342" y="522" width="1" height="20" fill="#000"/>
<rect x="340" y="522" width="3" height="1" fill="#000"/>
<rect x="340" y="541" width="3" height="1" fill="#000"/>
<rect x="345" y="492" width="1" height="38" fill="#000"/>
<rect x="344" y="498" width="3" height="24" fill="#fff"/>
<rect x="344" y="498" width="1" height="24" fill="#000"/>
<rect x="346" y="498" width="1" height="24" fill="#000"/>
<rect x="344" y="498" width="3" height="1" fill="#000"/>
<rect x="344" y="521" width="3" height="1" fill="#000"/>
<rect x="349" y="492" width="1" height="17" fill="#000"/>
<rect x="348" y="497" width="3" height="1" fill="#000"/>
<rect x="353" y="495" width="1" height="6" fill="#000"/>
<rect x="352" y="497" width="3" height="1" fill="#000"/>
<rect x="357" y="496" width="1" height="3" fill="#000"/>
<rect x="356" y="497" width="3" height="2" fill="#000"/>
<rect x="361" y="486" width="1" height="12" fill="#000"/>
<rect x="360" y="487" width="3" height="11" fill="#fff"/>
<rect x="360" y="487" width="1" height="11" fill="#000"/>
<rect x="362" y="487" width="1" height="11" fill="#000"/>
<rect x="360" y="487" width="3" height="1" fill="#000"/>
<rect x="360" y="497" width="3" height="1" fill="#000"/>
<rect x="365" y="483" width="1" height="6" fill="#000"/>
<rect x="364" y="485" width="3" height="1" fill="#000"/>
<rect x="369" y="479" width="1" height="10" fill="#000"/>
<rect x="368" y="480" width="3" height="6" fill="#fff"/>
<rect x="368" y="480" width="1" height="6" fill="#000"/>
<rect x="370" y="480" width="1" height="6" fill="#000"/>
<rect x="368" y="480" width="3" height="1" fill="#000"/>
<rect x="368" y="485" width="3" height="1" fill="#000"/>
<rect x="373" y="479" width="1" height="10" fill="#000"/>
<rect x="372" y="480" width="3" height="8" fill="#000"/>
<rect x="377" y="481" width="1" height="15" fill="#000"/>
<rect x="376" y="486" width="3" height="9" fill="#fff"/>
<rect x="376" y="486" width="1" height="9" fill="#000"/>
<rect x="378" y="486" width="1" height="9" fill="#000"/>
<rect x="376" y="486" width="3" height="1" fill="#000"/>
<rect x="376" y="494" width="3" height="1" fill="#000"/>
<rect x="381" y="482" width="1" height="6" fill="#000"/>
<rect x="380" y="485" width="3" height="1" fill="#000"/>
<rect x="385" y="483" width="1" height="5" fill="#000"/>
<rect x="384" y="485" width="3" height="1" fill="#000"/>
<rect x="389" y="483" width="1" height="4" fill="#000"/>
<rect x="388" y="484" width="3" height="2" fill="#fff"/>
<rect x="388" y="484" width="1" height="2" fill="#000"/>
<rect x="390" y="484" width="1" height="2" fill="#000"/>
<rect x="388" y="484" width="3" height="1" fill="#000"/>
<rect x="388" y="485" width="3" height="1" fill="#000"/>
<rect x="393" y="481" width="1" height="5" fill="#000"/>
<rect x="392" y="482" width="3" height="3" fill="#fff"/>
<rect x="392" y="482" width="1" height="3" fill="#000"/>
<rect x="394" y="482" width="1" height="3" fill="#000"/>
<rect x="392" y="482" width="3" height="1" fill="#000"/>
<rect x="392" y="484" width="3" height="1" fill="#000"/>
<rect x="397" y="482" width="1" height="4" fill="#000"/>
<rect x="396" y="482" width="3" height="2" fill="#000"/>
<rect x="401" y="483" width="1" height="4" fill="#000"/>
<rect x="400" y="485" width="3" height="1" fill="#000"/>
<rect x="405" y="482" width="1" height="7" fill="#000"/>
<rect x="404" y="486" width="3" height="1" fill="#000"/>
<rect x="409" y="474" width="1" height="13" fill="#000"/>
<rect x="408" y="485" width="3" height="1" fill="#000"/>
<rect x="413" y="485" width="1" height="16" fill="#000"/>
<rect x="412" y="486" width="3" height="4" fill="#000"/>
<rect x="417" y="482" width="1" height="9" fill="#000"/>
<rect x="416" y="488" width="3" height="3" fill="#000"/>
<rect x="421" y="489" width="1" height="15" fill="#000"/>
<rect x="420" y="489" width="3" height="12" fill="#000"/>
<rect x="425" y="494" width="1" height="8" fill="#000"/>
<rect x="424" y="497" width="3" height="4" fill="#000"/>
<rect x="429" y="490" width="1" height="11" fill="#000"/>
<rect x="428" y="491" width="3" height="7" fill="#fff"/>
<rect x="428" y="491" width="1" height="7" fill="#000"/>
<rect x="430" y="491" width="1" height="7" fill="#000"/>
<rect x="428" y="491" width="3" height="1" fill="#000"/>
<rect x="428" y="497" width="3" height="1" fill="#000"/>
<rect x="433" y="490" width="1" height="13" fill="#000"/>
<rect x="432" y="492" width="3" height="5" fill="#fff"/>
<rect x="432" y="492" width="1" height="5" fill="#000"/>
<rect x="434" y="492" width="1" height="5" fill="#000"/>
<rect x="432" y="492" width="3" height="1" fill="#000"/>
<rect x="432" y="496" width="3" height="1" fill="#000"/>
<rect x="437" y="482" width="1" height="10" fill="#000"/>
<rect x="436" y="485" width="3" height="7" fill="#fff"/>
<rect x="436" y="485" width="1" height="7" fill="#000"/>
<rect x="438" y="485" width="1" height="7" fill="#000"/>
<rect x="436" y="485" width="3" height="1" fill="#000"/>
<rect x="436" y="491" width="3" height="1" fill="#000"/>
<rect x="441" y="482" width="1" height="15" fill="#000"/>
<rect x="440" y="484" width="3" height="13" fill="#000"/>
<rect x="445" y="493" width="1" height="10" fill="#000"/>
<rect x="444" y="493" width="3" height="4" fill="#fff"/>
<rect x="444" y="493" width="1" height="4" fill="#000"/>
<rect x="446" y="493" width="1" height="4" fill="#000"/>
<rect x="444" y="493" width="3" height="1" fill="#000"/>
<rect x="444" y="496" width="3" height="1" fill="#000"/>
<rect x="449" y="475" width="1" height="20" fill="#000"/>
<rect x="448" y="480" width="3" height="13" fill="#fff"/>
<rect x="448" y="480" width="1" height="13" fill="#000"/>
<rect x="450" y="480" width="1" height="13" fill="#000"/>
<rect x="448" y="480" width="3" height="1" fill="#000"/>
<rect x="448" y="492" width="3" height="1" fill="#000"/>
<rect x="453" y="479" width="1" height="14" fill="#000"/>
<rect x="452" y="480" width="3" height="6" fill="#000"/>
<rect x="457" y="484" width="1" height="4" fill="#000"/>
<rect x="456" y="486" width="3" height="1" fill="#000"/>
<rect x="461" y="486" width="1" height="4" fill="#000"/>
<rect x="460" y="487" width="3" height="1" fill="#000"/>
<rect x="465" y="486" width="1" height="6" fill="#000"/>
<rect x="464" y="487" width="3" height="4" fill="#fff"/>
<rect x="464" y="487" width="1" height="4" fill="#000"/>
<rect x="466" y="487" width="1" height="4" fill="#000"/>
<rect x="464" y="487" width="3" height="1" fill="#000"/>
<rect x="464" y="490" width="3" height="1" fill="#000"/>
<rect x="469" y="487" width="1" height="5" fill="#000"/>
<rect x="468" y="487" width="3" height="5" fill="#000"/>
<rect x="473" y="486" width="1" height="10" fill="#000"/>
<rect x="472" y="491" width="3" height="3" fill="#fff"/>
<rect x="472" y="491" width="1" height="3" fill="#000"/>
<rect x="474" y="491" width="1" height="3" fill="#000"/>
<rect x="472" y="491" width="3" height="1" fill="#000"/>
<rect x="472" y="493" width="3" height="1" fill="#000"/>
<rect x="477" y="485" width="1" height="6" fill="#000"/>
<rect x="476" y="489" width="3" height="1" fill="#000"/>
<rect x="481" y="469" width="1" height="20" fill="#000"/>
<rect x="480" y="474" width="3" height="15" fill="#fff"/>
<rect x="480" y="474" width="1" height="15" fill="#000"/>
<rect x="482" y="474" width="1" height="15" fill="#000"/>
<rect x="480" y="474" width="3" height="1" fill="#000"/>
<rect x="480" y="488" width="3" height="1" fill="#000"/>
<rect x="485" y="474" width="1" height="5" fill="#000"/>
<rect x="484" y="474" width="3" height="5" fill="#000"/>
<rect x="489" y="474" width="1" height="8" fill="#000"/>
<rect x="488" y="477" width="3" height="2" fill="#000"/>
<rect x="493" y="476" width="1" height="3" fill="#000"/>
<rect x="492" y="477" width="3" height="1" fill="#fff"/>
<rect x="492" y="477" width="1" height="1" fill="#000"/>
<rect x="494" y="477" width="1" height="1" fill="#000"/>
<rect x="492" y="477" width="3" height="1" fill="#000"/>
<rect x="492" y="477" width="3" height="1" fill="#000"/>
<rect x="497" y="473" width="1" height="6" fill="#000"/>
<rect x="496" y="475" width="3" height="4" fill="#fff"/>
<rect x="496" y="475" width="1" height="4" fill="#000"/>
<rect x="498" y="475" width="1" height="4" fill="#000"/>
<rect x="496" y="475" width="3" height="1" fill="#000"/>
<rect x="496" y="478" width="3" height="1" fill="#000"/>
<rect x="501" y="475" width="1" height="5" fill="#000"/>
<rect x="500" y="475" width="3" height="4" fill="#000"/>
<rect x="505" y="477" width="1" height="6" fill="#000"/>
<rect x="504" y="477" width="3" height="1" fill="#000"/>
<rect x="509" y="477" width="1" height="21" fill="#000"/>
<rect x="508" y="479" width="3" height="12" fill="#000"/>
<rect x="513" y="480" width="1" height="8" fill="#000"/>
<rect x="512" y="482" width="3" height="4" fill="#000"/>
<rect x="517" y="464" width="1" height="18" fill="#000"/>
<rect x="516" y="471" width="3" height="11" fill="#fff"/>
<rect x="516" y="471" width="1" height="11" fill="#000"/>
<rect x="518" y="471" width="1" height="11" fill="#000"/>
<rect x="516" y="471" width="3" height="1" fill="#000"/>
<rect x="516" y="481" width="3" height="1" fill="#000"/>
<rect x="521" y="463" width="1" height="17" fill="#000"/>
<rect x="520" y="471" width="3" height="8" fill="#fff"/>
<rect x="520" y="471" width="1" height="8" fill="#000"/>
<rect x="522" y="471" width="1" height="8" fill="#000"/>
<rect x="520" y="471" width="3" height="1" fill="#000"/>
<rect x="520" y="478" width="3" height="1" fill="#000"/>
<rect x="525" y="469" width="1" height="10" fill="#000"/>
<rect x="524" y="469" width="3" height="9" fill="#fff"/>
<rect x="524" y="469" width="1" height="9" fill="#000"/>
<rect x="526" y="469" width="1" height="9" fill="#000"/>
<rect x="524" y="469" width="3" height="1" fill="#000"/>
<rect x="524" y="477" width="3" height="1" fill="#000"/>
<rect x="529" y="442" width="1" height="27" fill="#000"/>
<rect x="528" y="447" width="3" height="22" fill="#fff"/>
<rect x="528" y="447" width="1" height="22" fill="#000"/>
<rect x="530" y="447" width="1" height="22" fill="#000"/>
<rect x="528" y="447" width="3" height="1" fill="#000"/>
<rect x="528" y="468" width="3" height="1" fill="#000"/>
<rect x="533" y="441" width="1" height="30" fill="#000"/>
<rect x="532" y="447" width="3" height="15" fill="#000"/>
<rect x="537" y="455" width="1" height="13" fill="#000"/>
<rect x="536" y="462" width="3" height="2" fill="#000"/>
<rect x="541" y="432" width="1" height="32" fill="#000"/>
<rect x="540" y="432" width="3" height="32" fill="#fff"/>
<rect x="540" y="432" width="1" height="32" fill="#000"/>
<rect x="542" y="432" width="1" height="32" fill="#000"/>
<rect x="540" y="432" width="3" height="1" fill="#000"/>
<rect x="540" y="463" width="3" height="1" fill="#000"/>
<rect x="545" y="431" width="1" height="15" fill="#000"/>
<rect x="544" y="432" width="3" height="14" fill="#000"/>
<rect x="549" y="442" width="1" height="11" fill="#000"/>
<rect x="548" y="445" width="3" height="6" fill="#000"/>
<rect x="553" y="449" width="1" height="12" fill="#000"/>
<rect x="552" y="450" width="3" height="9" fill="#000"/>
<rect x="557" y="455" width="1" height="6" fill="#000"/>
<rect x="556" y="457" width="3" height="2" fill="#000"/>
<rect x="561" y="455" width="1" height="5" fill="#000"/>
<rect x="560" y="455" width="3" height="2" fill="#fff"/>
<rect x="560" y="455" width="1" height="2" fill="#000"/>
<rect x="562" y="455" width="1" height="2" fill="#000"/>
<rect x="560" y="455" width="3" height="1" fill="#000"/>
<rect x="560" y="456" width="3" height="1" fill="#000"/>
<rect x="565" y="453" width="1" height="6" fill="#000"/>
<rect x="564" y="455" width="3" height="2" fill="#000"/>
<rect x="569" y="450" width="1" height="12" fill="#000"/>
<rect x="568" y="456" width="3" height="1" fill="#000"/>
<rect x="573" y="454" width="1" height="6" fill="#000"/>
<rect x="572" y="457" width="3" height="2" fill="#000"/>
<rect x="577" y="457" width="1" height="4" fill="#000"/>
<rect x="576" y="458" width="3" height="2" fill="#000"/>
<rect x="581" y="457" width="1" height="5" fill="#000"/>
<rect x="580" y="458" width="3" height="2" fill="#000"/>
<rect x="585" y="455" width="1" height="4" fill="#000"/>
<rect x="584" y="457" width="3" height="2" fill="#000"/>
<rect x="589" y="456" width="1" height="3" fill="#000"/>
<rect x="588" y="457" width="3" height="1" fill="#000"/>
<rect x="593" y="455" width="1" height="4" fill="#000"/>
<rect x="592" y="456" width="3" height="2" fill="#000"/>
<rect x="597" y="455" width="1" height="4" fill="#000"/>
<rect x="596" y="456" width="3" height="2" fill="#000"/>
<rect x="601" y="439" width="1" height="17" fill="#000"/>
<rect x="600" y="441" width="3" height="15" fill="#fff"/>
<rect x="600" y="441" width="1" height="15" fill="#000"/>
<rect x="602" y="441" width="1" height="15" fill="#000"/>
<rect x="600" y="441" width="3" height="1" fill="#000"/>
<rect x="600" y="455" width="3" height="1" fill="#000"/>
<rect x="605" y="439" width="1" height="34" fill="#000"/>
<rect x="604" y="441" width="3" height="22" fill="#000"/>
<rect x="609" y="452" width="1" height="14" fill="#000"/>
<rect x="608" y="453" width="3" height="10" fill="#fff"/>
<rect x="608" y="453" width="1" height="10" fill="#000"/>
<rect x="610" y="453" width="1" height="10" fill="#000"/>
<rect x="608" y="453" width="3" height="1" fill="#000"/>
<rect x="608" y="462" width="3" height="1" fill="#000"/>
<rect x="613" y="443" width="1" height="13" fill="#000"/>
<rect x="612" y="445" width="3" height="11" fill="#fff"/>
<rect x="612" y="445" width="1" height="11" fill="#000"/>
<rect x="614" y="445" width="1" height="11" fill="#000"/>
<rect x="612" y="445" width="3" height="1" fill="#000"/>
<rect x="612" y="455" width="3" height="1" fill="#000"/>
<rect x="617" y="391" width="1" height="69" fill="#000"/>
<rect x="616" y="395" width="3" height="50" fill="#fff"/>
<rect x="616" y="395" width="1" height="50" fill="#000"/>
<rect x="618" y="395" width="1" height="50" fill="#000"/>
<rect x="616" y="395" width="3" height="1" fill="#000"/>
<rect x="616" y="444" width="3" height="1" fill="#000"/>
<rect x="621" y="379" width="1" height="24" fill="#000"/>
<rect x="620" y="395" width="3" height="8" fill="#000"/>
<rect x="625" y="394" width="1" height="19" fill="#000"/>
<rect x="624" y="403" width="3" height="5" fill="#000"/>
<rect x="629" y="392" width="1" height="17" fill="#000"/>
<rect x="628" y="394" width="3" height="14" fill="#fff"/>
<rect x="628" y="394" width="1" height="14" fill="#000"/>
<rect x="630" y="394" width="1" height="14" fill="#000"/>
<rect x="628" y="394" width="3" height="1" fill="#000"/>
<rect x="628" y="407" width="3" height="1" fill="#000"/>
<rect x="633" y="370" width="1" height="25" fill="#000"/>
<rect x="632" y="378" width="3" height="16" fill="#fff"/>
<rect x="632" y="378" width="1" height="16" fill="#000"/>
<rect x="634" y="378" width="1" height="16" fill="#000"/>
<rect x="632" y="378" width="3" height="1" fill="#000"/>
<rect x="632" y="393" width="3" height="1" fill="#000"/>
<rect x="637" y="357" width="1" height="24" fill="#000"/>
<rect x="636" y="360" width="3" height="18" fill="#fff"/>
<rect x="636" y="360" width="1" height="18" fill="#000"/>
<rect x="638" y="360" width="1" height="18" fill="#000"/>
<rect x="636" y="360" width="3" height="1" fill="#000"/>
<rect x="636" y="377" width="3" height="1" fill="#000"/>
<rect x="641" y="360" width="1" height="7" fill="#000"/>
<rect x="640" y="360" width="3" height="7" fill="#000"/>
<rect x="645" y="363" width="1" height="6" fill="#000"/>
<rect x="644" y="366" width="3" height="1" fill="#000"/>
<rect x="649" y="357" width="1" height="9" fill="#000"/>
<rect x="648" y="359" width="3" height="7" fill="#fff"/>
<rect x="648" y="359" width="1" height="7" fill="#000"/>
<rect x="650" y="359" width="1" height="7" fill="#000"/>
<rect x="648" y="359" width="3" height="1" fill="#000"/>
<rect x="648" y="365" width="3" height="1" fill="#000"/>
<rect x="653" y="349" width="1" height="13" fill="#000"/>
<rect x="652" y="352" width="3" height="7" fill="#fff"/>
<rect x="652" y="352" width="1" height="7" fill="#000"/>
<rect x="654" y="352" width="1" height="7" fill="#000"/>
<rect x="652" y="352" width="3" height="1" fill="#000"/>
<rect x="652" y="358" width="3" height="1" fill="#000"/>
<rect x="657" y="349" width="1" height="8" fill="#000"/>
<rect x="656" y="352" width="3" height="3" fill="#000"/>
<rect x="661" y="351" width="1" height="4" fill="#000"/>
<rect x="660" y="352" width="3" height="3" fill="#fff"/>
<rect x="660" y="352" width="1" height="3" fill="#000"/>
<rect x="662" y="352" width="1" height="3" fill="#000"/>
<rect x="660" y="352" width="3" height="1" fill="#000"/>
<rect x="660" y="354" width="3" height="1" fill="#000"/>
<rect x="665" y="336" width="1" height="18" fill="#000"/>
<rect x="664" y="342" width="3" height="12" fill="#fff"/>
<rect x="664" y="342" width="1" height="12" fill="#000"/>
<rect x="666" y="342" width="1" height="12" fill="#000"/>
<rect x="664" y="342" width="3" height="1" fill="#000"/>
<rect x="664" y="353" width="3" height="1" fill="#000"/>
<rect x="669" y="340" width="1" height="6" fill="#000"/>
<rect x="668" y="342" width="3" height="2" fill="#000"/>
<rect x="673" y="340" width="1" height="6" fill="#000"/>
<rect x="672" y="342" width="3" height="2" fill="#000"/>
<rect x="677" y="335" width="1" height="9" fill="#000"/>
<rect x="676" y="340" width="3" height="3" fill="#fff"/>
<rect x="676" y="340" width="1" height="3" fill="#000"/>
<rect x="678" y="340" width="1" height="3" fill="#000"/>
<rect x="676" y="340" width="3" height="1" fill="#000"/>
<rect x="676" y="342" width="3" height="1" fill="#000"/>
<rect x="681" y="333" width="1" height="7" fill="#000"/>
<rect x="680" y="336" width="3" height="4" fill="#fff"/>
<rect x="680" y="336" width="1" height="4" fill="#000"/>
<rect x="682" y="336" width="1" height="4" fill="#000"/>
<rect x="680" y="336" width="3" height="1" fill="#000"/>
<rect x="680" y="339" width="3" height="1" fill="#000"/>
<rect x="685" y="333" width="1" height="5" fill="#000"/>
<rect x="684" y="334" width="3" height="3" fill="#fff"/>
<rect x="684" y="334" width="1" height="3" fill="#000"/>
<rect x="686" y="334" width="1" height="3" fill="#000"/>
<rect x="684" y="334" width="3" height="1" fill="#000"/>
<rect x="684" y="336" width="3" height="1" fill="#000"/>
<rect x="689" y="333" width="1" height="7" fill="#000"/>
<rect x="688" y="334" width="3" height="1" fill="#000"/>
<rect x="693" y="335" width="1" height="9" fill="#000"/>
<rect x="692" y="335" width="3" height="9" fill="#000"/>
<rect x="697" y="334" width="1" height="13" fill="#000"/>
<rect x="696" y="341" width="3" height="3" fill="#fff"/>
<rect x="696" y="341" width="1" height="3" fill="#000"/>
<rect x="698" y="341" width="1" height="3" fill="#000"/>
<rect x="696" y="341" width="3" height="1" fill="#000"/>
<rect x="696" y="343" width="3" height="1" fill="#000"/>
<rect x="701" y="338" width="1" height="10" fill="#000"/>
<rect x="700" y="341" width="3" height="3" fill="#000"/>
<rect x="705" y="317" width="1" height="27" fill="#000"/>
<rect x="704" y="318" width="3" height="26" fill="#fff"/>
<rect x="704" y="318" width="1" height="26" fill="#000"/>
<rect x="706" y="318" width="1" height="26" fill="#000"/>
<rect x="704" y="318" width="3" height="1" fill="#000"/>
<rect x="704" y="343" width="3" height="1" fill="#000"/>
<rect x="709" y="311" width="1" height="15" fill="#000"/>
<rect x="708" y="315" width="3" height="3" fill="#fff"/>
<rect x="708" y="315" width="1" height="3" fill="#000"/>
<rect x="710" y="315" width="1" height="3" fill="#000"/>
<rect x="708" y="315" width="3" height="1" fill="#000"/>
<rect x="708" y="317" width="3" height="1" fill="#000"/>
<rect x="713" y="307" width="1" height="19" fill="#000"/>
<rect x="712" y="315" width="3" height="8" fill="#000"/>
<rect x="717" y="317" width="1" height="12" fill="#000"/>
<rect x="716" y="322" width="3" height="7" fill="#000"/>
<rect x="721" y="318" width="1" height="14" fill="#000"/>
<rect x="720" y="320" width="3" height="9" fill="#fff"/>
<rect x="720" y="320" width="1" height="9" fill="#000"/>
<rect x="722" y="320" width="1" height="9" fill="#000"/>
<rect x="720" y="320" width="3" height="1" fill="#000"/>
<rect x="720" y="328" width="3" height="1" fill="#000"/>
<rect x="725" y="297" width="1" height="25" fill="#000"/>
<rect x="724" y="316" width="3" height="5" fill="#fff"/>
<rect x="724" y="316" width="1" height="5" fill="#000"/>
<rect x="726" y="316" width="1" height="5" fill="#000"/>
<rect x="724" y="316" width="3" height="1" fill="#000"/>
<rect x="724" y="320" width="3" height="1" fill="#000"/>
<rect x="729" y="311" width="1" height="20" fill="#000"/>
<rect x="728" y="316" width="3" height="12" fill="#000"/>
<rect x="733" y="316" width="1" height="14" fill="#000"/>
<rect x="732" y="324" width="3" height="4" fill="#fff"/>
<rect x="732" y="324" width="1" height="4" fill="#000"/>
<rect x="734" y="324" width="1" height="4" fill="#000"/>
<rect x="732" y="324" width="3" height="1" fill="#000"/>
<rect x="732" y="327" width="3" height="1" fill="#000"/>
<rect x="737" y="318" width="1" height="10" fill="#000"/>
<rect x="736" y="319" width="3" height="5" fill="#fff"/>
<rect x="736" y="319" width="1" height="5" fill="#000"/>
<rect x="738" y="319" width="1" height="5" fill="#000"/>
<rect x="736" y="319" width="3" height="1" fill="#000"/>
<rect x="736" y="323" width="3" height="1" fill="#000"/>
<rect x="741" y="314" width="1" height="8" fill="#000"/>
<rect x="740" y="318" width="3" height="1" fill="#000"/>
<rect x="745" y="310" width="1" height="11" fill="#000"/>
<rect x="744" y="315" width="3" height="4" fill="#fff"/>
<rect x="744" y="315" width="1" height="4" fill="#000"/>
<rect x="746" y="315" width="1" height="4" fill="#000"/>
<rect x="744" y="315" width="3" height="1" fill="#000"/>
<rect x="744" y="318" width="3" height="1" fill="#000"/>
<rect x="749" y="310" width="1" height="9" fill="#000"/>
<rect x="748" y="311" width="3" height="4" fill="#fff"/>
<rect x="748" y="311" width="1" height="4" fill="#000"/>
<rect x="750" y="311" width="1" height="4" fill="#000"/>
<rect x="748" y="311" width="3" height="1" fill="#000"/>
<rect x="748" y="314" width="3" height="1" fill="#000"/>
<rect x="753" y="307" width="1" height="8" fill="#000"/>
<rect x="752" y="309" width="3" height="2" fill="#000"/>
<rect x="757" y="305" width="1" height="7" fill="#000"/>
<rect x="756" y="308" width="3" height="3" fill="#fff"/>
<rect x="756" y="308" width="1" height="3" fill="#000"/>
<rect x="758" y="308" width="1" height="3" fill="#000"/>
<rect x="756" y="308" width="3" height="1" fill="#000"/>
<rect x="756" y="310" width="3" height="1" fill="#000"/>
<rect x="761" y="307" width="1" height="4" fill="#000"/>
<rect x="760" y="307" width="3" height="1" fill="#000"/>
<rect x="765" y="305" width="1" height="5" fill="#000"/>
<rect x="764" y="307" width="3" height="3" fill="#000"/>
<rect x="769" y="305" width="1" height="9" fill="#000"/>
<rect x="768" y="309" width="3" height="4" fill="#000"/>
<rect x="773" y="306" width="1" height="7" fill="#000"/>
<rect x="772" y="312" width="3" height="1" fill="#000"/>
<rect x="777" y="307" width="1" height="8" fill="#000"/>
<rect x="776" y="311" width="3" height="2" fill="#000"/>
<rect x="781" y="309" width="1" height="6" fill="#000"/>
<rect x="780" y="311" width="3" height="2" fill="#000"/>
<rect x="785" y="309" width="1" height="4" fill="#000"/>
<rect x="784" y="312" width="3" height="1" fill="#000"/>
<rect x="789" y="309" width="1" height="5" fill="#000"/>
<rect x="788" y="311" width="3" height="2" fill="#000"/>
<rect x="793" y="310" width="1" height="7" fill="#000"/>
<rect x="792" y="312" width="3" height="4" fill="#fff"/>
<rect x="792" y="312" width="1" height="4" fill="#000"/>
<rect x="794" y="312" width="1" height="4" fill="#000"/>
<rect x="792" y="312" width="3" height="1" fill="#000"/>
<rect x="792" y="315" width="3" height="1" fill="#000"/>
<rect x="797" y="299" width="1" height="13" fill="#000"/>
<rect x="796" y="299" width="3" height="13" fill="#fff"/>
<rect x="796" y="299" width="1" height="13" fill="#000"/>
<rect x="798" y="299" width="1" height="13" fill="#000"/>
<rect x="796" y="299" width="3" height="1" fill="#000"/>
<rect x="796" y="311" width="3" height="1" fill="#000"/>
<rect x="801" y="268" width="1" height="31" fill="#000"/>
<rect x="800" y="272" width="3" height="27" fill="#fff"/>
<rect x="800" y="272" width="1" height="27" fill="#000"/>
<rect x="802" y="272" width="1" height="27" fill="#000"/>
<rect x="800" y="272" width="3" height="1" fill="#000"/>
<rect x="800" y="298" width="3" height="1" fill="#000"/>
<rect x="805" y="269" width="1" height="12" fill="#000"/>
<rect x="804" y="273" width="3" height="2" fill="#000"/>
<rect x="809" y="270" width="1" height="14" fill="#000"/>
<rect x="808" y="273" width="3" height="8" fill="#000"/>
<rect x="813" y="270" width="1" height="12" fill="#000"/>
<rect x="812" y="272" width="3" height="10" fill="#fff"/>
<rect x="812" y="272" width="1" height="10" fill="#000"/>
<rect x="814" y="272" width="1" height="10" fill="#000"/>
<rect x="812" y="272" width="3" height="1" fill="#000"/>
<rect x="812" y="281" width="3" height="1" fill="#000"/>
<rect x="817" y="261" width="1" height="16" fill="#000"/>
<rect x="816" y="272" width="3" height="1" fill="#000"/>
<rect x="821" y="267" width="1" height="12" fill="#000"/>
<rect x="820" y="272" width="3" height="1" fill="#000"/>
<rect x="825" y="263" width="1" height="12" fill="#000"/>
<rect x="824" y="266" width="3" height="7" fill="#fff"/>
<rect x="824" y="266" width="1" height="7" fill="#000"/>
<rect x="826" y="266" width="1" height="7" fill="#000"/>
<rect x="824" y="266" width="3" height="1" fill="#000"/>
<rect x="824" y="272" width="3" height="1" fill="#000"/>
<rect x="829" y="247" width="1" height="20" fill="#000"/>
<rect x="828" y="254" width="3" height="13" fill="#fff"/>
<rect x="828" y="254" width="1" height="13" fill="#000"/>
<rect x="830" y="254" width="1" height="13" fill="#000"/>
<rect x="828" y="254" width="3" height="1" fill="#000"/>
<rect x="828" y="266" width="3" height="1" fill="#000"/>
<rect x="833" y="251" width="1" height="10" fill="#000"/>
<rect x="832" y="254" width="3" height="1" fill="#000"/>
<rect x="837" y="251" width="1" height="7" fill="#000"/>
<rect x="836" y="254" width="3" height="1" fill="#000"/>
<rect x="841" y="250" width="1" height="5" fill="#000"/>
<rect x="840" y="251" width="3" height="4" fill="#fff"/>
<rect x="840" y="251" width="1" height="4" fill="#000"/>
<rect x="842" y="251" width="1" height="4" fill="#000"/>
<rect x="840" y="251" width="3" height="1" fill="#000"/>
<rect x="840" y="254" width="3" height="1" fill="#000"/>
<rect x="845" y="247" width="1" height="5" fill="#000"/>
<rect x="844" y="248" width="3" height="4" fill="#fff"/>
<rect x="844" y="248" width="1" height="4" fill="#000"/>
<rect x="846" y="248" width="1" height="4" fill="#000"/>
<rect x="844" y="248" width="3" height="1" fill="#000"/>
<rect x="844" y="251" width="3" height="1" fill="#000"/>
<rect x="849" y="244" width="1" height="4" fill="#000"/>
<rect x="848" y="246" width="3" height="2" fill="#fff"/>
<rect x="848" y="246" width="1" height="2" fill="#000"/>
<rect x="850" y="246" width="1" height="2" fill="#000"/>
<rect x="848" y="246" width="3" height="1" fill="#000"/>
<rect x="848" y="247" width="3" height="1" fill="#000"/>
<rect x="853" y="238" width="1" height="9" fill="#000"/>
<rect x="852" y="244" width="3" height="2" fill="#000"/>
<rect x="857" y="229" width="1" height="9" fill="#000"/>
<rect x="856" y="231" width="3" height="5" fill="#000"/>
<rect x="861" y="232" width="1" height="12" fill="#000"/>
<rect x="860" y="233" width="3" height="2" fill="#fff"/>
<rect x="860" y="233" width="1" height="2" fill="#000"/>
<rect x="862" y="233" width="1" height="2" fill="#000"/>
<rect x="860" y="233" width="3" height="1" fill="#000"/>
<rect x="860" y="234" width="3" height="1" fill="#000"/>
<rect x="865" y="229" width="1" height="14" fill="#000"/>
<rect x="864" y="233" width="3" height="2" fill="#000"/>
<rect x="869" y="191" width="1" height="44" fill="#000"/>
<rect x="868" y="192" width="3" height="43" fill="#fff"/>
<rect x="868" y="192" width="1" height="43" fill="#000"/>
<rect x="870" y="192" width="1" height="43" fill="#000"/>
<rect x="868" y="192" width="3" height="1" fill="#000"/>
<rect x="868" y="234" width="3" height="1" fill="#000"/>
<rect x="873" y="190" width="1" height="19" fill="#000"/>
<rect x="872" y="195" width="3" height="12" fill="#000"/>
<rect x="877" y="201" width="1" height="13" fill="#000"/>
<rect x="876" y="206" width="3" height="5" fill="#000"/>
<rect x="881" y="211" width="1" height="5" fill="#000"/>
<rect x="880" y="212" width="3" height="4" fill="#000"/>
<rect x="885" y="212" width="1" height="4" fill="#000"/>
<rect x="884" y="215" width="3" height="1" fill="#000"/>
<rect x="889" y="209" width="1" height="7" fill="#000"/>
<rect x="888" y="213" width="3" height="3" fill="#fff"/>
<rect x="888" y="213" width="1" height="3" fill="#000"/>
<rect x="890" y="213" width="1" height="3" fill="#000"/>
<rect x="888" y="213" width="3" height="1" fill="#000"/>
<rect x="888" y="215" width="3" height="1" fill="#000"/>
<rect x="893" y="213" width="1" height="16" fill="#000"/>
<rect x="892" y="214" width="3" height="12" fill="#000"/>
<rect x="897" y="216" width="1" height="18" fill="#000"/>
<rect x="896" y="226" width="3" height="4" fill="#000"/>
<rect x="901" y="223" width="1" height="41" fill="#000"/>
<rect x="900" y="229" width="3" height="33" fill="#000"/>
<rect x="905" y="247" width="1" height="15" fill="#000"/>
<rect x="904" y="249" width="3" height="13" fill="#fff"/>
<rect x="904" y="249" width="1" height="13" fill="#000"/>
<rect x="906" y="249" width="1" height="13" fill="#000"/>
<rect x="904" y="249" width="3" height="1" fill="#000"/>
<rect x="904" y="261" width="3" height="1" fill="#000"/>
<rect x="909" y="247" width="1" height="12" fill="#000"/>
<rect x="908" y="249" width="3" height="10" fill="#000"/>
<rect x="913" y="255" width="1" height="7" fill="#000"/>
<rect x="912" y="258" width="3" height="3" fill="#000"/>
<rect x="917" y="256" width="1" height="10" fill="#000"/>
<rect x="916" y="259" width="3" height="3" fill="#000"/>
<rect x="921" y="259" width="1" height="13" fill="#000"/>
<rect x="920" y="261" width="3" height="5" fill="#000"/>
<rect x="925" y="255" width="1" height="15" fill="#000"/>
<rect x="924" y="266" width="3" height="4" fill="#000"/>
<rect x="929" y="267" width="1" height="8" fill="#000"/>
<rect x="928" y="270" width="3" height="5" fill="#000"/>
<rect x="933" y="273" width="1" height="8" fill="#000"/>
<rect x="932" y="274" width="3" height="6" fill="#000"/>
<rect x="937" y="271" width="1" height="9" fill="#000"/>
<rect x="936" y="278" width="3" height="2" fill="#000"/>
<rect x="941" y="273" width="1" height="6" fill="#000"/>
<rect x="940" y="277" width="3" height="2" fill="#fff"/>
<rect x="940" y="277" width="1" height="2" fill="#000"/>
<rect x="942" y="277" width="1" height="2" fill="#000"/>
<rect x="940" y="277" width="3" height="1" fill="#000"/>
<rect x="940" y="278" width="3" height="1" fill="#000"/>
<rect x="945" y="269" width="1" height="8" fill="#000"/>
<rect x="944" y="273" width="3" height="4" fill="#fff"/>
<rect x="944" y="273" width="1" height="4" fill="#000"/>
<rect x="946" y="273" width="1" height="4" fill="#000"/>
<rect x="944" y="273" width="3" height="1" fill="#000"/>
<rect x="944" y="276" width="3" height="1" fill="#000"/>
<rect x="949" y="267" width="1" height="7" fill="#000"/>
<rect x="948" y="268" width="3" height="6" fill="#fff"/>
<rect x="948" y="268" width="1" height="6" fill="#000"/>
<rect x="950" y="268" width="1" height="6" fill="#000"/>
<rect x="948" y="268" width="3" height="1" fill="#000"/>
<rect x="948" y="273" width="3" height="1" fill="#000"/>
<rect x="953" y="266" width="1" height="6" fill="#000"/>
<rect x="952" y="268" width="3" height="4" fill="#fff"/>
<rect x="952" y="268" width="1" height="4" fill="#000"/>
<rect x="954" y="268" width="1" height="4" fill="#000"/>
<rect x="952" y="268" width="3" height="1" fill="#000"/>
<rect x="952" y="271" width="3" height="1" fill="#000"/>
<rect x="957" y="262" width="1" height="7" fill="#000"/>
<rect x="956" y="266" width="3" height="3" fill="#fff"/>
<rect x="956" y="266" width="1" height="3" fill="#000"/>
<rect x="958" y="266" width="1" height="3" fill="#000"/>
<rect x="956" y="266" width="3" height="1" fill="#000"/>
<rect x="956" y="268" width="3" height="1" fill="#000"/>
<rect x="961" y="262" width="1" height="6" fill="#000"/>
<rect x="960" y="264" width="3" height="4" fill="#fff"/>
<rect x="960" y="264" width="1" height="4" fill="#000"/>
<rect x="962" y="264" width="1" height="4" fill="#000"/>
<rect x="960" y="264" width="3" height="1" fill="#000"/>
<rect x="960" y="267" width="3" height="1" fill="#000"/>
<rect x="965" y="262" width="1" height="8" fill="#000"/>
<rect x="964" y="266" width="3" height="1" fill="#000"/>
<rect x="969" y="255" width="1" height="11" fill="#000"/>
<rect x="968" y="257" width="3" height="9" fill="#fff"/>
<rect x="968" y="257" width="1" height="9" fill="#000"/>
<rect x="970" y="257" width="1" height="9" fill="#000"/>
<rect x="968" y="257" width="3" height="1" fill="#000"/>
<rect x="968" y="265" width="3" height="1" fill="#000"/>
<rect x="973" y="254" width="1" height="9" fill="#000"/>
<rect x="972" y="257" width="3" height="1" fill="#000"/>
<rect x="977" y="256" width="1" height="6" fill="#000"/>
<rect x="976" y="258" width="3" height="1" fill="#000"/>
</g>
<path d="M345 491.5 H353.5 V499 M351.5 497 L353.5 500 L355.5 497" stroke="#00e000" fill="none" stroke-width="1"/>
<path transform="translate(41.0,522.0)" d="M-6 5 L-0.8 -4.5 L0.6 -4.5 L0.6 -0.5 L-0.8 2.4 L-4 4.2 Z" fill="#dc143c"/><path transform="translate(41.0,522.0)" d="M0.5 -4 L6 5 M-1 2.6 L4.5 3.2" stroke="#dc143c" fill="none" stroke-width="1"/>
<path transform="translate(84.5,529.9)" d="M-6 5 L-0.8 -4.5 L0.6 -4.5 L0.6 -0.5 L-0.8 2.4 L-4 4.2 Z" fill="#dc143c"/><path transform="translate(84.5,529.9)" d="M0.5 -4 L6 5 M-1 2.6 L4.5 3.2" stroke="#dc143c" fill="none" stroke-width="1"/>
<path transform="translate(97.2,525.6)" d="M-6 5 L-0.8 -4.5 L0.6 -4.5 L0.6 -0.5 L-0.8 2.4 L-4 4.2 Z" fill="#dc143c"/><path transform="translate(97.2,525.6)" d="M0.5 -4 L6 5 M-1 2.6 L4.5 3.2" stroke="#dc143c" fill="none" stroke-width="1"/>
<path transform="translate(121.1,524.4)" d="M-6 5 L-0.8 -4.5 L0.6 -4.5 L0.6 -0.5 L-0.8 2.4 L-4 4.2 Z" fill="#dc143c"/><path transform="translate(121.1,524.4)" d="M0.5 -4 L6 5 M-1 2.6 L4.5 3.2" stroke="#dc143c" fill="none" stroke-width="1"/>
<path transform="translate(133.2,528.3)" d="M-6 5 L-0.8 -4.5 L0.6 -4.5 L0.6 -0.5 L-0.8 2.4 L-4 4.2 Z" fill="#dc143c"/><path transform="translate(133.2,528.3)" d="M0.5 -4 L6 5 M-1 2.6 L4.5 3.2" stroke="#dc143c" fill="none" stroke-width="1"/>
<path transform="translate(169.0,529.9)" d="M-6 5 L-0.8 -4.5 L0.6 -4.5 L0.6 -0.5 L-0.8 2.4 L-4 4.2 Z" fill="#dc143c"/><path transform="translate(169.0,529.9)" d="M0.5 -4 L6 5 M-1 2.6 L4.5 3.2" stroke="#dc143c" fill="none" stroke-width="1"/>
<path transform="translate(193.1,533.0)" d="M-6 5 L-0.8 -4.5 L0.6 -4.5 L0.6 -0.5 L-0.8 2.4 L-4 4.2 Z" fill="#dc143c"/><path transform="translate(193.1,533.0)" d="M0.5 -4 L6 5 M-1 2.6 L4.5 3.2" stroke="#dc143c" fill="none" stroke-width="1"/>
<path transform="translate(221.3,543.0)" d="M-6 5 L-0.8 -4.5 L0.6 -4.5 L0.6 -0.5 L-0.8 2.4 L-4 4.2 Z" fill="#dc143c"/><path transform="translate(221.3,543.0)" d="M0.5 -4 L6 5 M-1 2.6 L4.5 3.2" stroke="#dc143c" fill="none" stroke-width="1"/>
<path transform="translate(256.9,520.2)" d="M-6 5 L-0.8 -4.5 L0.6 -4.5 L0.6 -0.5 L-0.8 2.4 L-4 4.2 Z" fill="#dc143c"/><path transform="translate(256.9,520.2)" d="M0.5 -4 L6 5 M-1 2.6 L4.5 3.2" stroke="#dc143c" fill="none" stroke-width="1"/>
<path transform="translate(289.6,537.0)" d="M-6 5 L-0.8 -4.5 L0.6 -4.5 L0.6 -0.5 L-0.8 2.4 L-4 4.2 Z" fill="#dc143c"/><path transform="translate(289.6,537.0)" d="M0.5 -4 L6 5 M-1 2.6 L4.5 3.2" stroke="#dc143c" fill="none" stroke-width="1"/>
<path transform="translate(317.1,512.9)" d="M-6 5 L-0.8 -4.5 L0.6 -4.5 L0.6 -0.5 L-0.8 2.4 L-4 4.2 Z" fill="#dc143c"/><path transform="translate(317.1,512.9)" d="M0.5 -4 L6 5 M-1 2.6 L4.5 3.2" stroke="#dc143c" fill="none" stroke-width="1"/>
<path transform="translate(348.9,482.8)" d="M-6 5 L-0.8 -4.5 L0.6 -4.5 L0.6 -0.5 L-0.8 2.4 L-4 4.2 Z" fill="#dc143c"/><path transform="translate(348.9,482.8)" d="M0.5 -4 L6 5 M-1 2.6 L4.5 3.2" stroke="#dc143c" fill="none" stroke-width="1"/>
<path transform="translate(372.9,469.7)" d="M-6 5 L-0.8 -4.5 L0.6 -4.5 L0.6 -0.5 L-0.8 2.4 L-4 4.2 Z" fill="#dc143c"/><path transform="translate(372.9,469.7)" d="M0.5 -4 L6 5 M-1 2.6 L4.5 3.2" stroke="#dc143c" fill="none" stroke-width="1"/>
<path transform="translate(396.5,471.8)" d="M-6 5 L-0.8 -4.5 L0.6 -4.5 L0.6 -0.5 L-0.8 2.4 L-4 4.2 Z" fill="#dc143c"/><path transform="translate(396.5,471.8)" d="M0.5 -4 L6 5 M-1 2.6 L4.5 3.2" stroke="#dc143c" fill="none" stroke-width="1"/>
<path transform="translate(409.4,463.6)" d="M-6 5 L-0.8 -4.5 L0.6 -4.5 L0.6 -0.5 L-0.8 2.4 L-4 4.2 Z" fill="#dc143c"/><path transform="translate(409.4,463.6)" d="M0.5 -4 L6 5 M-1 2.6 L4.5 3.2" stroke="#dc143c" fill="none" stroke-width="1"/>
<path transform="translate(449.2,465.7)" d="M-6 5 L-0.8 -4.5 L0.6 -4.5 L0.6 -0.5 L-0.8 2.4 L-4 4.2 Z" fill="#dc143c"/><path transform="translate(449.2,465.7)" d="M0.5 -4 L6 5 M-1 2.6 L4.5 3.2" stroke="#dc143c" fill="none" stroke-width="1"/>
<path transform="translate(481.2,458.4)" d="M-6 5 L-0.8 -4.5 L0.6 -4.5 L0.6 -0.5 L-0.8 2.4 L-4 4.2 Z" fill="#dc143c"/><path transform="translate(481.2,458.4)" d="M0.5 -4 L6 5 M-1 2.6 L4.5 3.2" stroke="#dc143c" fill="none" stroke-width="1"/>
<path transform="translate(497.1,463.6)" d="M-6 5 L-0.8 -4.5 L0.6 -4.5 L0.6 -0.5 L-0.8 2.4 L-4 4.2 Z" fill="#dc143c"/><path transform="translate(497.1,463.6)" d="M0.5 -4 L6 5 M-1 2.6 L4.5 3.2" stroke="#dc143c" fill="none" stroke-width="1"/>
<path transform="translate(544.9,420.4)" d="M-6 5 L-0.8 -4.5 L0.6 -4.5 L0.6 -0.5 L-0.8 2.4 L-4 4.2 Z" fill="#dc143c"/><path transform="translate(544.9,420.4)" d="M0.5 -4 L6 5 M-1 2.6 L4.5 3.2" stroke="#dc143c" fill="none" stroke-width="1"/>
<path transform="translate(564.5,442.4)" d="M-6 5 L-0.8 -4.5 L0.6 -4.5 L0.6 -0.5 L-0.8 2.4 L-4 4.2 Z" fill="#dc143c"/><path transform="translate(564.5,442.4)" d="M0.5 -4 L6 5 M-1 2.6 L4.5 3.2" stroke="#dc143c" fill="none" stroke-width="1"/>
<path transform="translate(585.1,445.6)" d="M-6 5 L-0.8 -4.5 L0.6 -4.5 L0.6 -0.5 L-0.8 2.4 L-4 4.2 Z" fill="#dc143c"/><path transform="translate(585.1,445.6)" d="M0.5 -4 L6 5 M-1 2.6 L4.5 3.2" stroke="#dc143c" fill="none" stroke-width="1"/>
<path transform="translate(601.5,429.4)" d="M-6 5 L-0.8 -4.5 L0.6 -4.5 L0.6 -0.5 L-0.8 2.4 L-4 4.2 Z" fill="#dc143c"/><path transform="translate(601.5,429.4)" d="M0.5 -4 L6 5 M-1 2.6 L4.5 3.2" stroke="#dc143c" fill="none" stroke-width="1"/>
<path transform="translate(621.1,369.6)" d="M-6 5 L-0.8 -4.5 L0.6 -4.5 L0.6 -0.5 L-0.8 2.4 L-4 4.2 Z" fill="#dc143c"/><path transform="translate(621.1,369.6)" d="M0.5 -4 L6 5 M-1 2.6 L4.5 3.2" stroke="#dc143c" fill="none" stroke-width="1"/>
<path transform="translate(637.2,347.6)" d="M-6 5 L-0.8 -4.5 L0.6 -4.5 L0.6 -0.5 L-0.8 2.4 L-4 4.2 Z" fill="#dc143c"/><path transform="translate(637.2,347.6)" d="M0.5 -4 L6 5 M-1 2.6 L4.5 3.2" stroke="#dc143c" fill="none" stroke-width="1"/>
<path transform="translate(665.1,326.8)" d="M-6 5 L-0.8 -4.5 L0.6 -4.5 L0.6 -0.5 L-0.8 2.4 L-4 4.2 Z" fill="#dc143c"/><path transform="translate(665.1,326.8)" d="M0.5 -4 L6 5 M-1 2.6 L4.5 3.2" stroke="#dc143c" fill="none" stroke-width="1"/>
<path transform="translate(685.2,322.7)" d="M-6 5 L-0.8 -4.5 L0.6 -4.5 L0.6 -0.5 L-0.8 2.4 L-4 4.2 Z" fill="#dc143c"/><path transform="translate(685.2,322.7)" d="M0.5 -4 L6 5 M-1 2.6 L4.5 3.2" stroke="#dc143c" fill="none" stroke-width="1"/>
<path transform="translate(713.0,300.1)" d="M-6 5 L-0.8 -4.5 L0.6 -4.5 L0.6 -0.5 L-0.8 2.4 L-4 4.2 Z" fill="#dc143c"/><path transform="translate(713.0,300.1)" d="M0.5 -4 L6 5 M-1 2.6 L4.5 3.2" stroke="#dc143c" fill="none" stroke-width="1"/>
<path transform="translate(725.1,287.5)" d="M-6 5 L-0.8 -4.5 L0.6 -4.5 L0.6 -0.5 L-0.8 2.4 L-4 4.2 Z" fill="#dc143c"/><path transform="translate(725.1,287.5)" d="M0.5 -4 L6 5 M-1 2.6 L4.5 3.2" stroke="#dc143c" fill="none" stroke-width="1"/>
<path transform="translate(756.6,295.4)" d="M-6 5 L-0.8 -4.5 L0.6 -4.5 L0.6 -0.5 L-0.8 2.4 L-4 4.2 Z" fill="#dc143c"/><path transform="translate(756.6,295.4)" d="M0.5 -4 L6 5 M-1 2.6 L4.5 3.2" stroke="#dc143c" fill="none" stroke-width="1"/>
<path transform="translate(768.8,295.4)" d="M-6 5 L-0.8 -4.5 L0.6 -4.5 L0.6 -0.5 L-0.8 2.4 L-4 4.2 Z" fill="#dc143c"/><path transform="translate(768.8,295.4)" d="M0.5 -4 L6 5 M-1 2.6 L4.5 3.2" stroke="#dc143c" fill="none" stroke-width="1"/>
<path transform="translate(800.6,256.1)" d="M-6 5 L-0.8 -4.5 L0.6 -4.5 L0.6 -0.5 L-0.8 2.4 L-4 4.2 Z" fill="#dc143c"/><path transform="translate(800.6,256.1)" d="M0.5 -4 L6 5 M-1 2.6 L4.5 3.2" stroke="#dc143c" fill="none" stroke-width="1"/>
<path transform="translate(817.1,251.4)" d="M-6 5 L-0.8 -4.5 L0.6 -4.5 L0.6 -0.5 L-0.8 2.4 L-4 4.2 Z" fill="#dc143c"/><path transform="translate(817.1,251.4)" d="M0.5 -4 L6 5 M-1 2.6 L4.5 3.2" stroke="#dc143c" fill="none" stroke-width="1"/>
<path transform="translate(829.7,237.3)" d="M-6 5 L-0.8 -4.5 L0.6 -4.5 L0.6 -0.5 L-0.8 2.4 L-4 4.2 Z" fill="#dc143c"/><path transform="translate(829.7,237.3)" d="M0.5 -4 L6 5 M-1 2.6 L4.5 3.2" stroke="#dc143c" fill="none" stroke-width="1"/>
<path transform="translate(857.2,218.4)" d="M-6 5 L-0.8 -4.5 L0.6 -4.5 L0.6 -0.5 L-0.8 2.4 L-4 4.2 Z" fill="#dc143c"/><path transform="translate(857.2,218.4)" d="M0.5 -4 L6 5 M-1 2.6 L4.5 3.2" stroke="#dc143c" fill="none" stroke-width="1"/>
<path transform="translate(873.2,180.4)" d="M-6 5 L-0.8 -4.5 L0.6 -4.5 L0.6 -0.5 L-0.8 2.4 L-4 4.2 Z" fill="#dc143c"/><path transform="translate(873.2,180.4)" d="M0.5 -4 L6 5 M-1 2.6 L4.5 3.2" stroke="#dc143c" fill="none" stroke-width="1"/>
<path transform="translate(889.4,199.6)" d="M-6 5 L-0.8 -4.5 L0.6 -4.5 L0.6 -0.5 L-0.8 2.4 L-4 4.2 Z" fill="#dc143c"/><path transform="translate(889.4,199.6)" d="M0.5 -4 L6 5 M-1 2.6 L4.5 3.2" stroke="#dc143c" fill="none" stroke-width="1"/>
<path transform="translate(925.5,245.9)" d="M-6 5 L-0.8 -4.5 L0.6 -4.5 L0.6 -0.5 L-0.8 2.4 L-4 4.2 Z" fill="#dc143c"/><path transform="translate(925.5,245.9)" d="M0.5 -4 L6 5 M-1 2.6 L4.5 3.2" stroke="#dc143c" fill="none" stroke-width="1"/>
<path transform="translate(25.0,602.1) rotate(180)" d="M-6 5 L-0.8 -4.5 L0.6 -4.5 L0.6 -0.5 L-0.8 2.4 L-4 4.2 Z" fill="#dc143c"/><path transform="translate(25.0,602.1) rotate(180)" d="M0.5 -4 L6 5 M-1 2.6 L4.5 3.2" stroke="#dc143c" fill="none" stroke-width="1"/>
<path transform="translate(64.9,577.8) rotate(180)" d="M-6 5 L-0.8 -4.5 L0.6 -4.5 L0.6 -0.5 L-0.8 2.4 L-4 4.2 Z" fill="#dc143c"/><path transform="translate(64.9,577.8) rotate(180)" d="M0.5 -4 L6 5 M-1 2.6 L4.5 3.2" stroke="#dc143c" fill="none" stroke-width="1"/>
<path transform="translate(109.0,556.6) rotate(180)" d="M-6 5 L-0.8 -4.5 L0.6 -4.5 L0.6 -0.5 L-0.8 2.4 L-4 4.2 Z" fill="#dc143c"/><path transform="translate(109.0,556.6) rotate(180)" d="M0.5 -4 L6 5 M-1 2.6 L4.5 3.2" stroke="#dc143c" fill="none" stroke-width="1"/>
<path transform="translate(149.1,606.0) rotate(180)" d="M-6 5 L-0.8 -4.5 L0.6 -4.5 L0.6 -0.5 L-0.8 2.4 L-4 4.2 Z" fill="#dc143c"/><path transform="translate(149.1,606.0) rotate(180)" d="M0.5 -4 L6 5 M-1 2.6 L4.5 3.2" stroke="#dc143c" fill="none" stroke-width="1"/>
<path transform="translate(185.2,570.7) rotate(180)" d="M-6 5 L-0.8 -4.5 L0.6 -4.5 L0.6 -0.5 L-0.8 2.4 L-4 4.2 Z" fill="#dc143c"/><path transform="translate(185.2,570.7) rotate(180)" d="M0.5 -4 L6 5 M-1 2.6 L4.5 3.2" stroke="#dc143c" fill="none" stroke-width="1"/>
<path transform="translate(281.0,564.9) rotate(180)" d="M-6 5 L-0.8 -4.5 L0.6 -4.5 L0.6 -0.5 L-0.8 2.4 L-4 4.2 Z" fill="#dc143c"/><path transform="translate(281.0,564.9) rotate(180)" d="M0.5 -4 L6 5 M-1 2.6 L4.5 3.2" stroke="#dc143c" fill="none" stroke-width="1"/>
<path transform="translate(325.0,570.0) rotate(180)" d="M-6 5 L-0.8 -4.5 L0.6 -4.5 L0.6 -0.5 L-0.8 2.4 L-4 4.2 Z" fill="#dc143c"/><path transform="translate(325.0,570.0) rotate(180)" d="M0.5 -4 L6 5 M-1 2.6 L4.5 3.2" stroke="#dc143c" fill="none" stroke-width="1"/>
<path transform="translate(341.9,554.3) rotate(180)" d="M-6 5 L-0.8 -4.5 L0.6 -4.5 L0.6 -0.5 L-0.8 2.4 L-4 4.2 Z" fill="#dc143c"/><path transform="translate(341.9,554.3) rotate(180)" d="M0.5 -4 L6 5 M-1 2.6 L4.5 3.2" stroke="#dc143c" fill="none" stroke-width="1"/>
<path transform="translate(376.8,502.7) rotate(180)" d="M-6 5 L-0.8 -4.5 L0.6 -4.5 L0.6 -0.5 L-0.8 2.4 L-4 4.2 Z" fill="#dc143c"/><path transform="translate(376.8,502.7) rotate(180)" d="M0.5 -4 L6 5 M-1 2.6 L4.5 3.2" stroke="#dc143c" fill="none" stroke-width="1"/>
<path transform="translate(388.6,495.8) rotate(180)" d="M-6 5 L-0.8 -4.5 L0.6 -4.5 L0.6 -0.5 L-0.8 2.4 L-4 4.2 Z" fill="#dc143c"/><path transform="translate(388.6,495.8) rotate(180)" d="M0.5 -4 L6 5 M-1 2.6 L4.5 3.2" stroke="#dc143c" fill="none" stroke-width="1"/>
<path transform="translate(421.2,511.5) rotate(180)" d="M-6 5 L-0.8 -4.5 L0.6 -4.5 L0.6 -0.5 L-0.8 2.4 L-4 4.2 Z" fill="#dc143c"/><path transform="translate(421.2,511.5) rotate(180)" d="M0.5 -4 L6 5 M-1 2.6 L4.5 3.2" stroke="#dc143c" fill="none" stroke-width="1"/>
<path transform="translate(445.6,510.0) rotate(180)" d="M-6 5 L-0.8 -4.5 L0.6 -4.5 L0.6 -0.5 L-0.8 2.4 L-4 4.2 Z" fill="#dc143c"/><path transform="translate(445.6,510.0) rotate(180)" d="M0.5 -4 L6 5 M-1 2.6 L4.5 3.2" stroke="#dc143c" fill="none" stroke-width="1"/>
<path transform="translate(473.1,501.3) rotate(180)" d="M-6 5 L-0.8 -4.5 L0.6 -4.5 L0.6 -0.5 L-0.8 2.4 L-4 4.2 Z" fill="#dc143c"/><path transform="translate(473.1,501.3) rotate(180)" d="M0.5 -4 L6 5 M-1 2.6 L4.5 3.2" stroke="#dc143c" fill="none" stroke-width="1"/>
<path transform="translate(509.2,506.0) rotate(180)" d="M-6 5 L-0.8 -4.5 L0.6 -4.5 L0.6 -0.5 L-0.8 2.4 L-4 4.2 Z" fill="#dc143c"/><path transform="translate(509.2,506.0) rotate(180)" d="M0.5 -4 L6 5 M-1 2.6 L4.5 3.2" stroke="#dc143c" fill="none" stroke-width="1"/>
<path transform="translate(551.6,469.1) rotate(180)" d="M-6 5 L-0.8 -4.5 L0.6 -4.5 L0.6 -0.5 L-0.8 2.4 L-4 4.2 Z" fill="#dc143c"/><path transform="translate(551.6,469.1) rotate(180)" d="M0.5 -4 L6 5 M-1 2.6 L4.5 3.2" stroke="#dc143c" fill="none" stroke-width="1"/>
<path transform="translate(577.2,469.9) rotate(180)" d="M-6 5 L-0.8 -4.5 L0.6 -4.5 L0.6 -0.5 L-0.8 2.4 L-4 4.2 Z" fill="#dc143c"/><path transform="translate(577.2,469.9) rotate(180)" d="M0.5 -4 L6 5 M-1 2.6 L4.5 3.2" stroke="#dc143c" fill="none" stroke-width="1"/>
<path transform="translate(605.4,481.5) rotate(180)" d="M-6 5 L-0.8 -4.5 L0.6 -4.5 L0.6 -0.5 L-0.8 2.4 L-4 4.2 Z" fill="#dc143c"/><path transform="translate(605.4,481.5) rotate(180)" d="M0.5 -4 L6 5 M-1 2.6 L4.5 3.2" stroke="#dc143c" fill="none" stroke-width="1"/>
<path transform="translate(701.6,357.3) rotate(180)" d="M-6 5 L-0.8 -4.5 L0.6 -4.5 L0.6 -0.5 L-0.8 2.4 L-4 4.2 Z" fill="#dc143c"/><path transform="translate(701.6,357.3) rotate(180)" d="M0.5 -4 L6 5 M-1 2.6 L4.5 3.2" stroke="#dc143c" fill="none" stroke-width="1"/>
<path transform="translate(720.9,339.7) rotate(180)" d="M-6 5 L-0.8 -4.5 L0.6 -4.5 L0.6 -0.5 L-0.8 2.4 L-4 4.2 Z" fill="#dc143c"/><path transform="translate(720.9,339.7) rotate(180)" d="M0.5 -4 L6 5 M-1 2.6 L4.5 3.2" stroke="#dc143c" fill="none" stroke-width="1"/>
<path transform="translate(733.5,341.3) rotate(180)" d="M-6 5 L-0.8 -4.5 L0.6 -4.5 L0.6 -0.5 L-0.8 2.4 L-4 4.2 Z" fill="#dc143c"/><path transform="translate(733.5,341.3) rotate(180)" d="M0.5 -4 L6 5 M-1 2.6 L4.5 3.2" stroke="#dc143c" fill="none" stroke-width="1"/>
<path transform="translate(780.6,324.8) rotate(180)" d="M-6 5 L-0.8 -4.5 L0.6 -4.5 L0.6 -0.5 L-0.8 2.4 L-4 4.2 Z" fill="#dc143c"/><path transform="translate(780.6,324.8) rotate(180)" d="M0.5 -4 L6 5 M-1 2.6 L4.5 3.2" stroke="#dc143c" fill="none" stroke-width="1"/>
<path transform="translate(792.4,325.6) rotate(180)" d="M-6 5 L-0.8 -4.5 L0.6 -4.5 L0.6 -0.5 L-0.8 2.4 L-4 4.2 Z" fill="#dc143c"/><path transform="translate(792.4,325.6) rotate(180)" d="M0.5 -4 L6 5 M-1 2.6 L4.5 3.2" stroke="#dc143c" fill="none" stroke-width="1"/>
<path transform="translate(900.9,271.0) rotate(180)" d="M-6 5 L-0.8 -4.5 L0.6 -4.5 L0.6 -0.5 L-0.8 2.4 L-4 4.2 Z" fill="#dc143c"/><path transform="translate(900.9,271.0) rotate(180)" d="M0.5 -4 L6 5 M-1 2.6 L4.5 3.2" stroke="#dc143c" fill="none" stroke-width="1"/>
<path transform="translate(936.9,288.4) rotate(180)" d="M-6 5 L-0.8 -4.5 L0.6 -4.5 L0.6 -0.5 L-0.8 2.4 L-4 4.2 Z" fill="#dc143c"/><path transform="translate(936.9,288.4) rotate(180)" d="M0.5 -4 L6 5 M-1 2.6 L4.5 3.2" stroke="#dc143c" fill="none" stroke-width="1"/>
<path transform="translate(964.8,278.2) rotate(180)" d="M-6 5 L-0.8 -4.5 L0.6 -4.5 L0.6 -0.5 L-0.8 2.4 L-4 4.2 Z" fill="#dc143c"/><path transform="translate(964.8,278.2) rotate(180)" d="M0.5 -4 L6 5 M-1 2.6 L4.5 3.2" stroke="#dc143c" fill="none" stroke-width="1"/>
<path d="M9.3 549.5 L17.4 553.4 L25.3 558.1 L33.1 563.3 L41.0 562.8 L48.8 560.5 L59.8 560.5 L70.8 560.2 L80.3 559.4 L89.7 555.8 L99.1 551.8 L108.5 549.0 L118.0 547.9 L125.8 547.1 L133.7 547.6 L138.4 548.4 L144.7 552.6 L152.5 556.2 L162.0 558.1 L171.4 559.4 L180.8 561.3 L188.7 563.2 L196.5 563.3 L204.0 562.9 L204.4 562.4 L211.9 560.5 L219.7 556.2 L227.6 556.2 L235.4 558.2 L241.7 559.8 L249.6 559.3 L257.4 557.1 L266.8 555.8 L276.3 554.3 L285.7 553.8 L295.1 553.0 L304.5 549.6 L314.0 546.1 L323.4 544.1 L332.8 543.3 L340.7 543.0 L348.5 537.8 L358.0 529.9 L367.4 522.1 L376.8 513.4 L386.2 507.1 L394.1 501.2 L400.0 498.2 L400.4 496.9 L407.9 490.3 L415.7 488.0 L425.1 488.0 L434.6 488.8 L447.1 489.2 L459.7 489.9 L469.1 490.8 L478.6 490.8 L488.0 489.9 L497.4 486.4 L506.8 484.5 L516.3 482.5 L525.7 479.3 L538.3 475.4 L546.1 469.9 L554.0 466.8 L563.4 464.4 L572.8 462.1 L582.2 459.4 L591.7 456.9 L596.0 455.6 L598.0 455.6 L605.4 455.6 L614.1 455.6 L619.6 450.1 L627.4 444.6 L635.3 436.0 L643.1 425.8 L649.4 417.1 L658.8 404.6 L665.1 395.0 L666.7 392.0 L671.4 385.3 L674.6 380.2 L677.7 375.8 L684.0 364.8 L690.3 358.6 L696.5 353.1 L702.8 347.6 L709.1 342.8 L715.4 340.5 L721.7 337.3 L729.5 333.7 L737.4 331.1 L745.3 327.1 L753.1 324.3 L761.0 321.6 L767.2 319.3 L773.5 316.4 L781.4 315.8 L789.2 315.3 L792.0 315.9 L794.7 314.1 L798.3 312.8 L804.6 308.1 L810.9 304.1 L818.7 299.1 L825.0 296.3 L832.8 289.2 L839.1 283.7 L845.4 278.2 L851.7 271.9 L858.0 265.6 L864.3 258.6 L870.6 251.5 L876.8 245.2 L883.1 240.5 L889.4 236.6 L892.5 233.3 L898.8 231.8 L905.1 232.2 L913.0 232.6 L920.8 233.7 L928.7 237.0 L935.0 242.0 L941.3 247.5 L947.5 253.0 L953.8 258.5 L960.1 263.2 L966.4 266.3 L972.7 266.8 L978.2 266.3" stroke="#0000ff" stroke-width="3" fill="none" stroke-linejoin="round" stroke-linecap="round" shape-rendering="crispEdges"/>
<path d="M9.0 584.0 L25.0 594.3 L41.5 532.5 L149.4 598.2 L317.9 522.8 L325.0 563.4 L409.4 473.8 L421.2 504.0 L481.2 468.7 L509.5 498.7 L545.3 430.6 L605.4 473.7 L873.4 190.1 L936.5 279.8 L973.5 253.8" stroke="#ff0000" stroke-width="2.25" fill="none" stroke-linejoin="miter" shape-rendering="crispEdges"/>
<path d="M992 199.500 V184 H1001 V199.500" stroke="#ff0000" stroke-width="2" fill="none" stroke-linejoin="miter"/>
<path d="M992.500 199.300 H986 L996.500 209.300 L1007 199.300 H1000.500" stroke="#ff0000" stroke-width="1.400" fill="none" stroke-linejoin="miter"/>
<path d="M1013.500 316.500 V330 H1022.500 V316.500" stroke="#ff0000" stroke-width="2" fill="none" stroke-linejoin="miter"/>
<path d="M1014 316.700 H1007.500 L1018 306.700 L1028.500 316.700 H1022" stroke="#ff0000" stroke-width="1.400" fill="none" stroke-linejoin="miter"/>
</g>
<path d="M979 110 H988 L983.5 114.5 Z" fill="#778899"/>
<g shape-rendering="crispEdges">
<rect x="8" y="109" width="1222" height="1" fill="#000"/>
<rect x="8" y="109" width="1" height="559" fill="#000"/>
<rect x="8" y="667" width="1222" height="1" fill="#000"/>
<rect x="1229" y="109" width="1" height="559" fill="#000"/>
<rect x="9" y="668" width="1" height="3" fill="#000"/>
<rect x="73" y="668" width="1" height="3" fill="#000"/>
<rect x="137" y="668" width="1" height="3" fill="#000"/>
<rect x="201" y="668" width="1" height="3" fill="#000"/>
<rect x="265" y="668" width="1" height="3" fill="#000"/>
<rect x="329" y="668" width="1" height="3" fill="#000"/>
<rect x="393" y="668" width="1" height="3" fill="#000"/>
<rect x="457" y="668" width="1" height="3" fill="#000"/>
<rect x="521" y="668" width="1" height="3" fill="#000"/>
<rect x="585" y="668" width="1" height="3" fill="#000"/>
<rect x="649" y="668" width="1" height="3" fill="#000"/>
<rect x="713" y="668" width="1" height="3" fill="#000"/>
<rect x="777" y="668" width="1" height="3" fill="#000"/>
<rect x="841" y="668" width="1" height="3" fill="#000"/>
<rect x="905" y="668" width="1" height="3" fill="#000"/>
<rect x="969" y="668" width="1" height="3" fill="#000"/>
<rect x="1230" y="136" width="2" height="1" fill="#000"/>
<rect x="1230" y="169" width="2" height="1" fill="#000"/>
<rect x="1230" y="202" width="2" height="1" fill="#000"/>
<rect x="1230" y="235" width="2" height="1" fill="#000"/>
<rect x="1230" y="268" width="2" height="1" fill="#000"/>
<rect x="1230" y="301" width="2" height="1" fill="#000"/>
<rect x="1230" y="334" width="2" height="1" fill="#000"/>
<rect x="1230" y="367" width="2" height="1" fill="#000"/>
<rect x="1230" y="400" width="2" height="1" fill="#000"/>
<rect x="1230" y="433" width="2" height="1" fill="#000"/>
<rect x="1230" y="466" width="2" height="1" fill="#000"/>
<rect x="1230" y="499" width="2" height="1" fill="#000"/>
<rect x="1230" y="532" width="2" height="1" fill="#000"/>
<rect x="1230" y="565" width="2" height="1" fill="#000"/>
<rect x="1230" y="598" width="2" height="1" fill="#000"/>
<rect x="1230" y="631" width="2" height="1" fill="#000"/>
<rect x="1230" y="664" width="2" height="1" fill="#000"/>
</g>
<g font-family="Liberation Sans, sans-serif" font-size="10.2px" fill="#000" stroke="#000" stroke-width="0.25">
<path d="M12 116 H19 L15.5 119.5 Z" fill="#000" stroke="none"/>
<text x="24" y="121" textLength="53" lengthAdjust="spacingAndGlyphs">GBPUSD,H1</text>
<text x="84.5" y="121" textLength="139.5" lengthAdjust="spacingAndGlyphs">1.67289 1.67294 1.67218 1.67269</text>
<text x="1235.5" y="139.3" textLength="33" lengthAdjust="spacingAndGlyphs">1.68970</text>
<text x="1235.5" y="172.3" textLength="33" lengthAdjust="spacingAndGlyphs">1.68510</text>
<text x="1235.5" y="205.3" textLength="33" lengthAdjust="spacingAndGlyphs">1.68050</text>
<text x="1235.5" y="238.3" textLength="33" lengthAdjust="spacingAndGlyphs">1.67590</text>
<text x="1235.5" y="271.3" textLength="33" lengthAdjust="spacingAndGlyphs">1.67130</text>
<text x="1235.5" y="337.3" textLength="33" lengthAdjust="spacingAndGlyphs">1.66200</text>
<text x="1235.5" y="370.3" textLength="33" lengthAdjust="spacingAndGlyphs">1.65740</text>
<text x="1235.5" y="403.3" textLength="33" lengthAdjust="spacingAndGlyphs">1.65280</text>
<text x="1235.5" y="436.3" textLength="33" lengthAdjust="spacingAndGlyphs">1.64820</text>
<text x="1235.5" y="469.3" textLength="33" lengthAdjust="spacingAndGlyphs">1.64360</text>
<text x="1235.5" y="502.3" textLength="33" lengthAdjust="spacingAndGlyphs">1.63900</text>
<text x="1235.5" y="535.3" textLength="33" lengthAdjust="spacingAndGlyphs">1.63440</text>
<text x="1235.5" y="568.3" textLength="33" lengthAdjust="spacingAndGlyphs">1.62980</text>
<text x="1235.5" y="601.3" textLength="33" lengthAdjust="spacingAndGlyphs">1.62520</text>
<text x="1235.5" y="634.3" textLength="33" lengthAdjust="spacingAndGlyphs">1.62050</text>
<text x="1235.5" y="667.3" textLength="33" lengthAdjust="spacingAndGlyphs">1.61590</text>
<text x="8" y="680" textLength="46.5" lengthAdjust="spacingAndGlyphs">4 Feb 2014</text>
<text x="72" y="680" textLength="48.5" lengthAdjust="spacingAndGlyphs">4 Feb 20:00</text>
<text x="136" y="680" textLength="48.5" lengthAdjust="spacingAndGlyphs">5 Feb 12:00</text>
<text x="200" y="680" textLength="48.5" lengthAdjust="spacingAndGlyphs">6 Feb 04:00</text>
<text x="264" y="680" textLength="48.5" lengthAdjust="spacingAndGlyphs">6 Feb 20:00</text>
<text x="328" y="680" textLength="48.5" lengthAdjust="spacingAndGlyphs">7 Feb 12:00</text>
<text x="392" y="680" textLength="54.5" lengthAdjust="spacingAndGlyphs">10 Feb 04:00</text>
<text x="456" y="680" textLength="54.5" lengthAdjust="spacingAndGlyphs">10 Feb 20:00</text>
<text x="520" y="680" textLength="54.5" lengthAdjust="spacingAndGlyphs">11 Feb 12:00</text>
<text x="584" y="680" textLength="54.5" lengthAdjust="spacingAndGlyphs">12 Feb 04:00</text>
<text x="648" y="680" textLength="54.5" lengthAdjust="spacingAndGlyphs">12 Feb 20:00</text>
<text x="712" y="680" textLength="54.5" lengthAdjust="spacingAndGlyphs">13 Feb 12:00</text>
<text x="776" y="680" textLength="54.5" lengthAdjust="spacingAndGlyphs">14 Feb 04:00</text>
<text x="840" y="680" textLength="54.5" lengthAdjust="spacingAndGlyphs">14 Feb 20:00</text>
<text x="904" y="680" textLength="54.5" lengthAdjust="spacingAndGlyphs">17 Feb 12:00</text>
<text x="968" y="680" textLength="54.5" lengthAdjust="spacingAndGlyphs">18 Feb 04:00</text>
</g>
<rect x="1232" y="206" width="39" height="11" fill="#0000c8" shape-rendering="crispEdges"/>
<text x="1235.5" y="215.5" font-family="Liberation Sans, sans-serif" font-size="10.2px" fill="#fff" textLength="33" lengthAdjust="spacingAndGlyphs">1.67907</text>
<rect x="1232" y="240" width="39" height="11" fill="#ff0000" shape-rendering="crispEdges"/>
<text x="1235.5" y="249.5" font-family="Liberation Sans, sans-serif" font-size="10.2px" fill="#fff" textLength="33" lengthAdjust="spacingAndGlyphs">1.67447</text>
<rect x="1232" y="252" width="39" height="11" fill="#000" shape-rendering="crispEdges"/>
<text x="1235.5" y="261.5" font-family="Liberation Sans, sans-serif" font-size="10.2px" fill="#fff" textLength="33" lengthAdjust="spacingAndGlyphs">1.67269</text>
<rect x="1232" y="297" width="39" height="11" fill="#0000c8" shape-rendering="crispEdges"/>
<text x="1235.5" y="306.5" font-family="Liberation Sans, sans-serif" font-size="10.2px" fill="#fff" textLength="33" lengthAdjust="spacingAndGlyphs">1.66638</text>
</svg>
<div class="abs" style="left:4px;top:687px;width:1270px;height:1px;background:#404040"></div>
<div class="abs" style="left:4px;top:688px;width:1270px;height:18px;background:#e0e0e0"></div>
<div class="abs" style="left:5px;top:688px;width:2px;height:18px;background:#8c887c"></div>
<div class="abs" style="left:88px;top:687px;width:80px;height:19px;background:#fff;border:1px solid #000;border-top:none;box-sizing:border-box"></div>
<div class="abs" style="left:89px;top:686px;width:78px;height:2px;background:#fff"></div>
<svg class="abs" style="left:18px;top:689px;overflow:visible" width="57" height="14"><text x="0" y="11" font-size="11px" font-family="Liberation Sans, sans-serif" fill="#7c7c72" textLength="57" lengthAdjust="spacingAndGlyphs">EURUSD,H1</text></svg>
<svg class="abs" style="left:178px;top:689px;overflow:visible" width="53" height="14"><text x="0" y="11" font-size="11px" font-family="Liberation Sans, sans-serif" fill="#7c7c72" textLength="53" lengthAdjust="spacingAndGlyphs">GBPJPY,H4</text></svg>
<svg class="abs" style="left:254px;top:689px;overflow:visible" width="58" height="14"><text x="0" y="11" font-size="11px" font-family="Liberation Sans, sans-serif" fill="#7c7c72" textLength="58" lengthAdjust="spacingAndGlyphs">AUDUSD,H1</text></svg>
<svg class="abs" style="left:334px;top:689px;overflow:visible" width="54" height="14"><text x="0" y="11" font-size="11px" font-family="Liberation Sans, sans-serif" fill="#7c7c72" textLength="54" lengthAdjust="spacingAndGlyphs">USDJPY,H4</text></svg>
<svg class="abs" style="left:410px;top:689px;overflow:visible" width="54" height="14"><text x="0" y="11" font-size="11px" font-family="Liberation Sans, sans-serif" fill="#7c7c72" textLength="54" lengthAdjust="spacingAndGlyphs">EURJPY,H4</text></svg>
<svg class="abs" style="left:486px;top:689px;overflow:visible" width="57" height="14"><text x="0" y="11" font-size="11px" font-family="Liberation Sans, sans-serif" fill="#7c7c72" textLength="57" lengthAdjust="spacingAndGlyphs">NZDUSD,H4</text></svg>
<svg class="abs" style="left:566px;top:689px;overflow:visible" width="66" height="14"><text x="0" y="11" font-size="11px" font-family="Liberation Sans, sans-serif" fill="#7c7c72" textLength="66" lengthAdjust="spacingAndGlyphs">GBPCHF,Daily</text></svg>
<svg class="abs" style="left:653px;top:689px;overflow:visible" width="67" height="14"><text x="0" y="11" font-size="11px" font-family="Liberation Sans, sans-serif" fill="#7c7c72" textLength="67" lengthAdjust="spacingAndGlyphs">XAUUSD,Daily</text></svg>
<svg class="abs" style="left:743px;top:689px;overflow:visible" width="56" height="14"><text x="0" y="11" font-size="11px" font-family="Liberation Sans, sans-serif" fill="#7c7c72" textLength="56" lengthAdjust="spacingAndGlyphs">EURGBP,H1</text></svg>
<svg class="abs" style="left:822px;top:689px;overflow:visible" width="58" height="14"><text x="0" y="11" font-size="11px" font-family="Liberation Sans, sans-serif" fill="#7c7c72" textLength="58" lengthAdjust="spacingAndGlyphs">USDCAD,H1</text></svg>
<svg class="abs" style="left:902px;top:689px;overflow:visible" width="57" height="14"><text x="0" y="11" font-size="11px" font-family="Liberation Sans, sans-serif" fill="#7c7c72" textLength="57" lengthAdjust="spacingAndGlyphs">USDCHF,H1</text></svg>
<svg class="abs" style="left:982px;top:689px;overflow:visible" width="57" height="14"><text x="0" y="11" font-size="11px" font-family="Liberation Sans, sans-serif" fill="#7c7c72" textLength="57" lengthAdjust="spacingAndGlyphs">EURCHF,H4</text></svg>
<svg class="abs" style="left:1062px;top:689px;overflow:visible" width="58" height="14"><text x="0" y="11" font-size="11px" font-family="Liberation Sans, sans-serif" fill="#7c7c72" textLength="58" lengthAdjust="spacingAndGlyphs">AUDNZD,H4</text></svg>
<svg class="abs" style="left:99px;top:689px;overflow:visible" width="56" height="14"><text x="0" y="11" font-size="11px" font-family="Liberation Sans, sans-serif" fill="#000" textLength="56" lengthAdjust="spacingAndGlyphs">GBPUSD,H1</text></svg>
<div class="tsep" style="left:244px"></div>
<div class="tsep" style="left:324px"></div>
<div class="tsep" style="left:400px"></div>
<div class="tsep" style="left:476px"></div>
<div class="tsep" style="left:556px"></div>
<div class="tsep" style="left:644px"></div>
<div class="tsep" style="left:732px"></div>
<div class="tsep" style="left:812px"></div>
<div class="tsep" style="left:892px"></div>
<div class="tsep" style="left:972px"></div>
<div class="tsep" style="left:1052px"></div>
<div class="tsep" style="left:1132px"></div>
<svg class="abs" style="left:1244px;top:692px" width="24" height="10"><path d="M5.500 1.500 v6 l-3.200 -3 z M19 1.500 v6 l3.200 -3 z" fill="#a8a8a8"/></svg>
<div class="abs" style="left:4px;top:706px;width:1270px;height:1px;background:#f4f4f4"></div>
<div class="abs" style="left:4px;top:707px;width:1270px;height:1px;background:#fff"></div>
<div class="abs" style="left:4px;top:708px;width:1270px;height:20px;background:#e0e0e0"></div>
<svg class="abs" style="left:6px;top:711px;overflow:visible" width="127" height="14"><text x="0" y="11" font-size="11px" font-family="Liberation Sans, sans-serif" textLength="127" lengthAdjust="spacingAndGlyphs">Для справки, нажмите F1</text></svg>
<svg class="abs" style="left:668px;top:711px;overflow:visible" width="87" height="14"><text x="0" y="11" font-size="11px" font-family="Liberation Sans, sans-serif" textLength="87" lengthAdjust="spacingAndGlyphs">2014.02.13 09:00</text></svg>
<svg class="abs" style="left:769px;top:711px;overflow:visible" width="55" height="14"><text x="0" y="11" font-size="11px" font-family="Liberation Sans, sans-serif" textLength="55" lengthAdjust="spacingAndGlyphs">O: 1.66103</text></svg>
<svg class="abs" style="left:840px;top:711px;overflow:visible" width="54" height="14"><text x="0" y="11" font-size="11px" font-family="Liberation Sans, sans-serif" textLength="54" lengthAdjust="spacingAndGlyphs">H: 1.66147</text></svg>
<svg class="abs" style="left:911px;top:711px;overflow:visible" width="52" height="14"><text x="0" y="11" font-size="11px" font-family="Liberation Sans, sans-serif" textLength="52" lengthAdjust="spacingAndGlyphs">L: 1.65998</text></svg>
<svg class="abs" style="left:980px;top:711px;overflow:visible" width="54" height="14"><text x="0" y="11" font-size="11px" font-family="Liberation Sans, sans-serif" textLength="54" lengthAdjust="spacingAndGlyphs">C: 1.66063</text></svg>
<svg class="abs" style="left:1051px;top:711px;overflow:visible" width="37" height="14"><text x="0" y="11" font-size="11px" font-family="Liberation Sans, sans-serif" textLength="37" lengthAdjust="spacingAndGlyphs">V: 2084</text></svg>
<svg class="abs" style="left:1168px;top:711px;overflow:visible" width="42" height="14"><text x="0" y="11" font-size="11px" font-family="Liberation Sans, sans-serif" textLength="42" lengthAdjust="spacingAndGlyphs">558/1 kb</text></svg>
<div class="ssep" style="left:553px"></div>
<div class="ssep" style="left:663px"></div>
<div class="ssep" style="left:763px"></div>
<div class="ssep" style="left:835px"></div>
<div class="ssep" style="left:906px"></div>
<div class="ssep" style="left:975px"></div>
<div class="ssep" style="left:1046px"></div>
<div class="ssep" style="left:1113px"></div>
<svg class="abs" style="left:1118px;top:712px" width="25" height="12"><rect x="0" y="0" width="2" height="8" fill="#30a030"/><rect x="0" y="8" width="2" height="3" fill="#c02020"/><rect x="3" y="0" width="2" height="7" fill="#30a030"/><rect x="3" y="7" width="2" height="4" fill="#c02020"/><rect x="6" y="0" width="2" height="6" fill="#30a030"/><rect x="6" y="6" width="2" height="5" fill="#c02020"/><rect x="9" y="0" width="2" height="5" fill="#30a030"/><rect x="9" y="5" width="2" height="6" fill="#c02020"/><rect x="12" y="0" width="2" height="4" fill="#30a030"/><rect x="12" y="4" width="2" height="7" fill="#c02020"/><rect x="15" y="0" width="2" height="3" fill="#30a030"/><rect x="15" y="3" width="2" height="8" fill="#c02020"/><rect x="18" y="0" width="2" height="2" fill="#30a030"/><rect x="18" y="2" width="2" height="9" fill="#c02020"/><rect x="21" y="0" width="2" height="1" fill="#30a030"/><rect x="21" y="1" width="2" height="10" fill="#c02020"/></svg>
<svg class="abs" style="left:1260px;top:714px" width="14" height="14"><path d="M1 14 L14 1 M5 14 L14 5 M9 14 L14 9" stroke="#a8a8a8" stroke-width="1.500"/></svg>
<div class="abs" style="left:0;top:728px;width:1278px;height:4px;background:#2a2a2a"></div>
<div class="abs" style="left:0;top:731px;width:1278px;height:1px;background:#000"></div>
</body></html>
